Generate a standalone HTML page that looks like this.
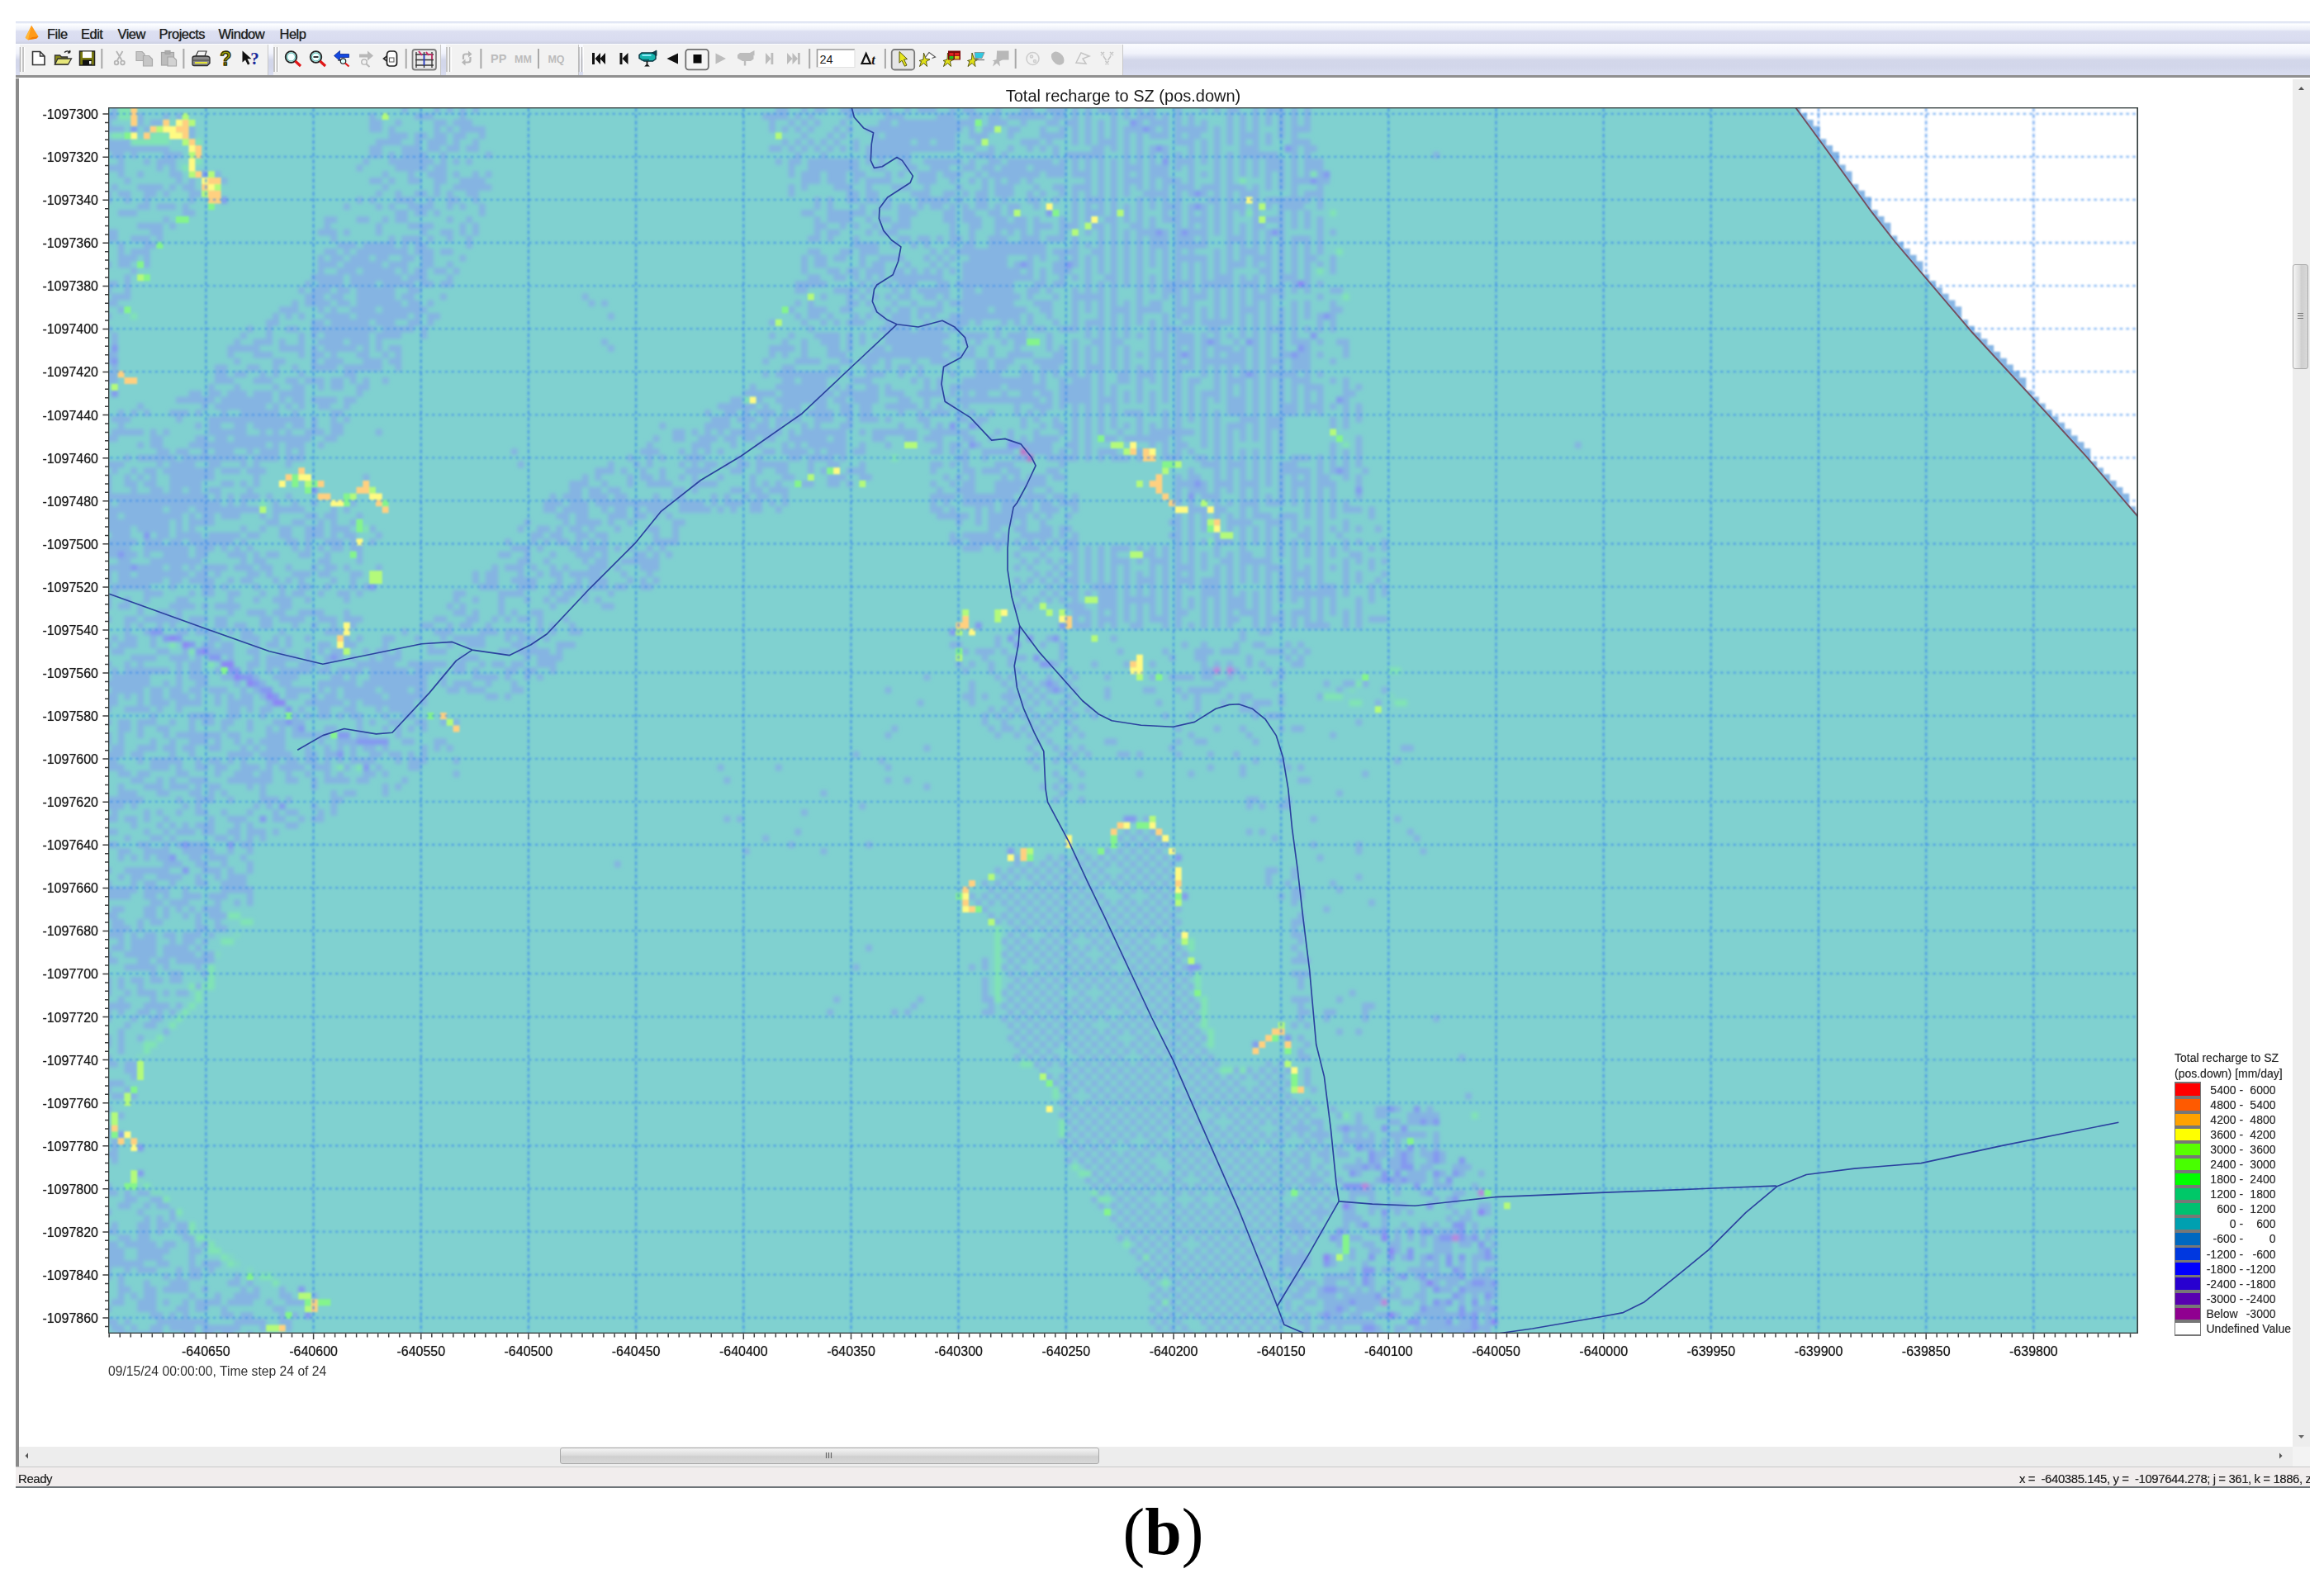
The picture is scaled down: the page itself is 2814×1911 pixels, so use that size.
<!DOCTYPE html>
<html><head><meta charset="utf-8"><title>Total recharge to SZ (pos.down)</title>
<style>
html,body{margin:0;padding:0;background:#fff;}
body{width:2814px;height:1911px;position:relative;overflow:hidden;font-family:"Liberation Sans",sans-serif;color:#222;}
.abs{position:absolute;}
#menubar{left:19px;top:25.5px;width:2778px;height:27.5px;background:linear-gradient(#ccd4ea 0%,#e4e9f6 5%,#fdfeff 12%,#eef1fa 35%,#dcdff1 45%,#d9dcf0 85%,#ccd0e2 100%);}
#toolbar{left:19px;top:53px;width:2778px;height:39px;background:linear-gradient(#fbfcff 0%,#f0f2fb 30%,#d3d7ea 50%,#d2d6ea 70%,#dadef1 100%);}
#tbline{left:19px;top:91.3px;width:2778px;height:3.2px;background:#909090;}
.tbseg{top:54px;height:37px;background:#f2f2f2;border-right:1px solid #c8c8c8;}
.menu{top:31px;font-size:16.5px;letter-spacing:-0.5px;line-height:20px;color:#1c1c1c;white-space:nowrap;text-shadow:0 0 0.7px rgba(0,0,0,.55);}
#lborder{left:19px;top:95px;width:3.5px;height:1681px;background:#8a8a8a;}
#vscroll{left:2775.5px;top:95.5px;width:21.5px;height:1657px;background:#ededed;}
#hscroll{left:22.5px;top:1752px;width:2753px;height:23.5px;background:#ededed;}
#corner{left:2775.5px;top:1752px;width:21.5px;height:23.5px;background:#f3f3f3;}
#status{left:19px;top:1776px;width:2778px;height:24.5px;background:#f1eded;border-top:1.5px solid #c9c9c9;box-sizing:border-box;}
#statusline{left:19px;top:1800.2px;width:2778px;height:1.9px;background:#6e7478;}
.st{top:1781px;font-size:15px;letter-spacing:-0.44px;line-height:20px;color:#222;white-space:pre;text-shadow:0 0 0.6px rgba(0,0,0,.45);}
.ax{font-size:16px;line-height:18px;color:#1a1a1a;white-space:nowrap;text-shadow:0 0 0.9px rgba(0,0,0,.65);}
.lg{font-size:14px;line-height:16px;color:#2a2a2a;white-space:pre;text-shadow:0 0 0.7px rgba(0,0,0,.45);}
.thumb{border:1px solid #a9a9a9;border-radius:3px;box-sizing:border-box;}
#win{position:absolute;left:0;top:0;width:2814px;height:1806px;filter:blur(0.65px);}
</style></head><body>
<div id="win">
<div id="menubar" class="abs"></div>
<div id="toolbar" class="abs"></div>
<div class="abs tbseg" style="left:24px;width:300px;"></div>
<div class="abs tbseg" style="left:331px;width:202px;"></div>
<div class="abs tbseg" style="left:540px;width:160px;"></div>
<div class="abs tbseg" style="left:706px;width:653px;"></div>
<div id="tbline" class="abs"></div>
<svg class="abs" style="left:28px;top:30px" width="22" height="20" viewBox="0 0 26 24"><path d="M12 1 L3 19 L7 22 L19 20 L22 17 Z" fill="#ff9a1a"/><path d="M12 1 L3 19 L7 22 Z" fill="#ffb73a"/><path d="M7 22 L19 20 L22 17 L13 18Z" fill="#f57c00"/></svg>
<span class="abs menu" style="left:57px;">File</span>
<span class="abs menu" style="left:98px;">Edit</span>
<span class="abs menu" style="left:142.5px;">View</span>
<span class="abs menu" style="left:192.5px;">Projects</span>
<span class="abs menu" style="left:264.5px;">Window</span>
<span class="abs menu" style="left:338.5px;">Help</span>
<div id="lborder" class="abs"></div>
<div id="vscroll" class="abs"></div>
<div id="hscroll" class="abs"></div>
<div id="corner" class="abs"></div>
<div class="abs thumb" style="left:2776px;top:320px;width:19px;height:127px;background:linear-gradient(90deg,#f4f4f4,#dcdcdc 45%,#cfcfcf 55%,#d8d8d8);"></div>
<div class="abs thumb" style="left:678px;top:1753px;width:653px;height:19.5px;background:linear-gradient(#f4f4f4,#dcdcdc 45%,#cfcfcf 55%,#d8d8d8);"></div>
<svg class="abs" style="left:2775px;top:95px" width="22" height="1680" viewBox="0 0 22 1680">
<path d="M8 14 L11.5 10 L15 14Z" fill="#555"/><path d="M8 1643 L11.5 1647 L15 1643Z" fill="#666"/>
<path d="M7 284.500 h7 M7 287.500 h7 M7 290.500 h7" stroke="#777" stroke-width="1.2"/></svg>
<svg class="abs" style="left:22px;top:1752px" width="2754" height="24" viewBox="0 0 2754 24">
<path d="M12 7.5 L8.5 11 L12 14.5Z" fill="#555"/><path d="M2738 7.5 L2741.5 11 L2738 14.5Z" fill="#555"/>
<path d="M978.500 7 v7 M981.500 7 v7 M984.500 7 v7" stroke="#666" stroke-width="1.2"/></svg>
<div id="status" class="abs"></div>
<div id="statusline" class="abs"></div>
<span class="abs st" style="left:22px;">Ready</span>
<span class="abs st" style="left:2445px;width:352px;overflow:hidden;">x =  -640385.145, y =  -1097644.278; j = 361, k = 1886, z = 0</span>
<svg class="abs" style="left:0;top:50px" width="1400" height="46" viewBox="0 50 1400 46">
<g stroke="#b5b5b5" stroke-width="1.5">
<path d="M24.500 57v30 M28 57v30 M332 57v30 M335.500 57v30 M541 57v30 M544.500 57v30 M701 57v30 M704.500 57v30"/>
</g>
<g stroke="#fff" stroke-width="1.2"><path d="M26.200 57v30 M29.700 57v30 M333.700 57v30 M337.200 57v30 M542.700 57v30 M546.200 57v30 M702.700 57v30 M706.200 57v30"/></g>
<g stroke="#a8a8a8" stroke-width="2"><path d="M123.300 59v24 M222.400 59v24 M491.700 59v24 M582.400 59v24 M652 59v24 M980.200 59v24 M1071.900 59v24 M1229.700 59v24"/></g>
<!-- new -->
<path d="M39.500 62.500h9l5.500 5.500v10.500h-14.500z" fill="#fff" stroke="#333" stroke-width="1.6"/><path d="M48.500 62.500v5.500h5.500" fill="none" stroke="#333" stroke-width="1.4"/>
<!-- open -->
<path d="M66.500 67h6l2 2h7v9h-15z" fill="#8a8a1a" stroke="#333" stroke-width="1.3"/><path d="M66.500 78l3.500-7h16.500l-4 7z" fill="#e6e67a" stroke="#333" stroke-width="1.3"/><path d="M78 63.500c2-2 5-2 7 0m0 0l-0.500-2.500m0.500 2.500l-3 0.500" fill="none" stroke="#222" stroke-width="1.4"/>
<!-- save -->
<rect x="96.500" y="62" width="18" height="17" fill="#7a7a10" stroke="#222" stroke-width="1.5"/><rect x="100" y="62.500" width="11" height="7.500" fill="#fff"/><rect x="100" y="72.500" width="11" height="6.500" fill="#111"/><rect x="108" y="74" width="2.500" height="3.500" fill="#fff"/>
<!-- cut copy paste (disabled) -->
<g fill="none" stroke="#b4b4b4" stroke-width="1.8"><path d="M141 62l6.500 11 M148.500 62l-6.500 11"/><circle cx="141" cy="76" r="2.300"/><circle cx="148.500" cy="76" r="2.300"/></g>
<g fill="#c6c6c6" stroke="#aaa" stroke-width="1.2"><path d="M165 62.500h7l3 3v8h-10z"/><path d="M173.500 67.500h7l4 4v8.500h-11z"/></g>
<g fill="#bdbdbd" stroke="#a4a4a4" stroke-width="1.2"><rect x="195.500" y="63.500" width="15" height="15.500"/><rect x="200" y="61.500" width="6" height="4" fill="#ababab"/><path d="M203 69h7l3.500 3.500v7.500h-10.500z" fill="#d2d2d2"/></g>
<!-- print -->
<path d="M237 68l3-6h10l-2 6z" fill="#f4f4f4" stroke="#333" stroke-width="1.2"/><path d="M233 70.500q0-2.500 3-2.500h14q4 0 4 3v5.500l-3 3h-16q-2 0-2-2z" fill="#8a8a8a" stroke="#2a2a2a" stroke-width="1.3"/><path d="M236 76h15" stroke="#e4e43a" stroke-width="2"/><path d="M234 73h19" stroke="#4a4a4a" stroke-width="1.2"/>
<!-- ? -->
<text x="273.200" y="78.500" font-family="Liberation Sans,sans-serif" font-weight="bold" font-size="23" text-anchor="middle" fill="#a6a608" stroke="#2c2c00" stroke-width="1.3">?</text>
<!-- pointer ? -->
<path d="M293.500 61.500v14l3.500-3 3 6 2.500-1.200-3-6h5z" fill="#111"/>
<text x="308.500" y="77.500" font-family="Liberation Serif,serif" font-weight="bold" font-size="21" text-anchor="middle" fill="#1a2a9a">?</text>
<!-- zoom in/out -->
<g fill="none"><circle cx="352.500" cy="69" r="6.800" stroke="#222" stroke-width="1.8" fill="#f4ffff"/><circle cx="352.500" cy="69" r="5" stroke="#39b0a8" stroke-width="1"/><path d="M357.500 74l6.500 6" stroke="#e01818" stroke-width="3.200"/>
<circle cx="382.500" cy="69" r="6.800" stroke="#222" stroke-width="1.800" fill="#f4ffff"/><circle cx="382.500" cy="69" r="5" stroke="#39b0a8" stroke-width="1"/><path d="M379.500 69h6" stroke="#222" stroke-width="1.800"/><path d="M387.500 74l6.500 6" stroke="#e01818" stroke-width="3.200"/></g>
<!-- prev/next zoom -->
<path d="M404.500 67.500l7-6v4h11v4h-11v4z" fill="#1448e0" stroke="#0a2890" stroke-width="0.800"/><circle cx="415.500" cy="74" r="3.200" fill="#dff" stroke="#222" stroke-width="1.200"/><path d="M418 76.500l4.500 4" stroke="#e01818" stroke-width="2.200"/><path d="M409 73h3" stroke="#333" stroke-width="1.200"/>
<path d="M452 67.500l-7-6v4h-10v4h10v4z" fill="#b8b8b8"/><circle cx="441" cy="75" r="3.200" fill="none" stroke="#b0b0b0" stroke-width="1.300"/><path d="M443.500 77.500l4 3.500" stroke="#b8b8b8" stroke-width="2"/>
<!-- pan -->
<path d="M468.500 66.500q0-4 3.500-4.500h5q3.500 0.500 3.500 4.500v10q0 3-3 3.500h-6q-3-0.500-3-3.500z" fill="#fff" stroke="#222" stroke-width="1.700"/><path d="M468.500 68l-4 3 4 3" fill="none" stroke="#222" stroke-width="1.600"/><rect x="471.500" y="70" width="5.500" height="5" fill="none" stroke="#666" stroke-width="1.100"/>
<!-- grid button -->
<rect x="499.500" y="60" width="28.500" height="24.500" rx="3" fill="#e9e9e9" stroke="#7d7d7d" stroke-width="1.800"/>
<g stroke="#333" stroke-width="1.300" fill="none"><path d="M504 63v19 M513.500 63v19 M523 63v19 M503 66h22 M503 72.500h22 M503 79h22"/></g>
<path d="M507 62l4 5 M516 63l3 4" stroke="#d02a6a" stroke-width="2"/><path d="M513.500 66v13" stroke="#2038d0" stroke-width="1.600"/><path d="M519 66h4v6" stroke="#d02a6a" stroke-width="1.500" fill="none"/>
<!-- refresh disabled -->
<g fill="none" stroke="#b6b6b6" stroke-width="2.200"><path d="M561 72v-4q0-2.500 3-2.500h5"/><path d="M569.500 69v4q0 2.500-3 2.500h-5"/></g><path d="M567 61.500l4.500 4-4.500 4z M563.500 71.500l-4.500 4 4.500 4z" fill="#b6b6b6"/>
<g font-family="Liberation Sans,sans-serif" font-weight="bold" font-size="14.500" fill="#bcbcbc" text-anchor="middle"><text x="603.700" y="76">PP</text><text x="633.500" y="75.500" font-size="12.500">MM</text><text x="673.500" y="75.500" font-size="12.500">MQ</text></g>
<!-- playback -->
<g fill="#111"><rect x="717" y="64" width="3" height="14"/><path d="M726.500 71l6.500-7v14z M720.500 71l6.500-7v14z"/>
<rect x="750.500" y="64" width="3" height="14"/><path d="M753.500 71l7-7v14z"/>
<path d="M807.500 71l13.500-6.500v13z"/><rect x="839.500" y="66" width="10" height="10.500"/></g>
<rect x="830.300" y="59.800" width="27.500" height="24.500" rx="3.500" fill="#f4f4f4" stroke="#6e6e6e" stroke-width="1.800"/><rect x="839.500" y="66" width="10" height="10.500" fill="#0a0a0a"/>
<!-- camera teal -->
<path d="M774 66.500l3-2.500h13.500l3.500 2v5.500l-3.500 2.500h-10.500l-6-3.500z" fill="#16b4ae" stroke="#0a3440" stroke-width="1.400"/><path d="M777.500 67h11" stroke="#9af0ff" stroke-width="1.800"/><path d="M789.500 64l5.500-3v6.500z" fill="#0a4450" stroke="#08303a" stroke-width="0.800"/><path d="M776 72.500h10" stroke="#0a5a60" stroke-width="1.400"/><path d="M783.500 74v3.500" stroke="#222" stroke-width="2"/><path d="M780.200 80.500l3.300-3.500 3.300 3.500z" fill="#111"/>
<g fill="#bcbcbc"><path d="M879 71l-12.500-6.500v13z"/>
<path d="M893 66.500l3-2.500h13l3.500 2v5.500l-3.500 2.500h-10l-6-3.500z"/><path d="M908 64l5.500-3v6.500z"/><rect x="900.800" y="74" width="2.400" height="5.500"/>
<rect x="933.500" y="64" width="2.800" height="14"/><path d="M933.500 71l-6.500-7v14z"/>
<rect x="966" y="64" width="2.800" height="14"/><path d="M966 71l-6.500-7v14z M959.500 71l-6.500-7v14z"/></g>
<!-- input -->
<rect x="989.500" y="60" width="45.500" height="21.500" fill="#fff"/><path d="M989.500 81.500v-21.500h45.500" fill="none" stroke="#9a9a9a" stroke-width="1.600"/><path d="M989.500 81.500h45.500v-21.500" fill="none" stroke="#e2e2e2" stroke-width="1.200"/>
<text x="992.500" y="76.500" font-family="Liberation Sans,sans-serif" font-size="14.500" fill="#222">24</text>
<path d="M1043.500 77l5.200-12 5.200 12z" fill="none" stroke="#111" stroke-width="2.200"/><text x="1055.200" y="77.500" font-family="Liberation Serif,serif" font-style="italic" font-weight="bold" font-size="16" fill="#111">t</text>
<!-- pointer box -->
<rect x="1079.700" y="60" width="27.500" height="24.500" rx="3.500" fill="#e6e6e6" stroke="#7a7a7a" stroke-width="1.800"/>
<path d="M1089 62.500l9.500 9-4 0.500 3.500 7-2.500 1.200-3.500-7-3 3z" fill="#e8e820" stroke="#55550a" stroke-width="1"/>
<g id="ystar"><path d="M1113 73.500l5-1.500 0.500-8 2.500 7 5 1-4.500 2.500 1 6-4-4-5 4 2-6z" fill="#e0e018" stroke="#4a4a08" stroke-width="0.900"/></g>
<path d="M1120 70l5-6.500 7.500 5.500-4 1.500" fill="#fff" stroke="#555" stroke-width="1.200"/>
<path d="M1142 73.500l5-1.500 0.500-8 2.500 7 5 1-4.500 2.500 1 6-4-4-5 4 2-6z" fill="#e0e018" stroke="#4a4a08" stroke-width="0.900"/>
<rect x="1148" y="61.500" width="15" height="11" fill="#7a0a0a"/><rect x="1149.500" y="64" width="5" height="3.500" fill="#e02020"/><rect x="1156" y="64" width="5.500" height="3.500" fill="#e02020"/><rect x="1149.500" y="68" width="5" height="3.500" fill="#20c020"/><rect x="1156" y="68" width="5.500" height="3.500" fill="#e0c020"/>
<path d="M1171.500 73.500l5-1.500 0.500-8 2.500 7 5 1-4.500 2.500 1 6-4-4-5 4 2-6z" fill="#e0e018" stroke="#4a4a08" stroke-width="0.900"/>
<path d="M1180 63.500h12l-3 7h-8z" fill="#30c8e0" stroke="#888" stroke-width="0.800"/><path d="M1180 72.500h12" stroke="#777" stroke-width="1.300"/>
<g fill="#b8b8b8"><path d="M1201.500 73.500l5-1.500 0.500-8 2.500 7 5 1-4.500 2.500 1 6-4-4-5 4 2-6z"/><rect x="1207" y="61.500" width="14.500" height="11"/></g>
<g fill="none" stroke="#cdcdcd" stroke-width="1.600"><circle cx="1250.500" cy="71" r="7.500"/><circle cx="1249" cy="68.500" r="1.500"/><circle cx="1253" cy="74" r="1.500"/></g>
<path d="M1273 66q4-6 10-2 7 5 5 12-4 5-10 1-6-5-5-11z" fill="#bdbdbd"/>
<g fill="none" stroke="#c4c4c4" stroke-width="1.500"><path d="M1303 76l6-12 10 4-8 3 4 6z"/><path d="M1333 63l4 4m0-4l-4 4 M1344 63l4 4m0-4l-4 4 M1338.500 74l4 4m0-4l-4 4 M1336 68l3.500 5 M1345 68l-3.500 5"/></g>
</svg>
<svg class="abs" style="left:131.0px;top:130.3px" width="2457.7" height="1485.0" viewBox="131.0 130.3 2457.7 1485.0">
<defs><filter id="bl" x="-1%" y="-1%" width="102%" height="102%"><feGaussianBlur stdDeviation="1.0"/></filter><filter id="blc" x="-1%" y="-1%" width="102%" height="102%"><feGaussianBlur stdDeviation="2.2"/></filter><filter id="bl2"><feGaussianBlur stdDeviation="0.6"/></filter><filter id="bl3"><feGaussianBlur stdDeviation="0.9"/></filter></defs>
<rect x="131.0" y="130.3" width="2457.7" height="1485.0" fill="#fff"/>
<g filter="url(#bl)">
<path fill="#86b5e4" d="M2172.3 129.6h7.8v7.8h-7.8zM2172.3 137.4h15.6v7.8h-15.6zM2180.1 145.2h15.6v7.8h-15.6zM2187.9 153.0h15.6v7.8h-15.6zM2195.7 160.8h7.8v7.8h-7.8zM2195.7 168.6h15.6v7.8h-15.6zM2203.5 176.4h15.6v7.8h-15.6zM2211.3 184.2h15.6v7.8h-15.6zM2219.1 192.0h7.8v7.8h-7.8zM2219.1 199.9h15.6v7.8h-15.6zM2226.9 207.7h15.6v7.8h-15.6zM2234.7 215.5h7.8v7.8h-7.8zM2234.7 223.3h15.6v7.8h-15.6zM2242.5 231.1h15.6v7.8h-15.6zM2250.3 238.9h15.6v7.8h-15.6zM2258.1 246.7h7.8v7.8h-7.8zM2258.1 254.5h15.6v7.8h-15.6zM2265.9 262.3h15.6v7.8h-15.6zM2273.8 270.1h15.6v7.8h-15.6zM2281.6 277.9h7.8v7.8h-7.8zM2281.6 285.7h15.6v7.8h-15.6zM2289.4 293.5h15.6v7.8h-15.6zM2297.2 301.3h15.6v7.8h-15.6zM2305.0 309.1h15.6v7.8h-15.6zM2312.8 316.9h15.6v7.8h-15.6zM2320.6 324.8h7.8v7.8h-7.8zM2320.6 332.6h15.6v7.8h-15.6zM2328.4 340.4h15.6v7.8h-15.6zM2336.2 348.2h15.6v7.8h-15.6zM2344.0 356.0h15.6v7.8h-15.6zM2351.8 363.8h15.6v7.8h-15.6zM2359.6 371.6h15.6v7.8h-15.6zM2367.4 379.4h7.8v7.8h-7.8zM2367.4 387.2h15.6v7.8h-15.6zM2375.2 395.0h15.6v7.8h-15.6zM2383.0 402.8h15.6v7.8h-15.6zM2390.8 410.6h15.6v7.8h-15.6zM2398.6 418.4h15.6v7.8h-15.6zM2406.5 426.2h15.6v7.8h-15.6zM2414.3 434.0h15.6v7.8h-15.6zM2422.1 441.8h15.6v7.8h-15.6zM2429.9 449.6h15.6v7.8h-15.6zM2437.7 457.5h15.6v7.8h-15.6zM2445.5 465.3h7.8v7.8h-7.8zM2445.5 473.1h15.6v7.8h-15.6zM2453.3 480.9h15.6v7.8h-15.6zM2461.1 488.7h15.6v7.8h-15.6zM2468.9 496.5h15.6v7.8h-15.6zM2476.7 504.3h15.6v7.8h-15.6zM2484.5 512.1h15.6v7.8h-15.6zM2492.3 519.9h15.6v7.8h-15.6zM2500.1 527.7h15.6v7.8h-15.6zM2507.9 535.5h15.6v7.8h-15.6zM2515.7 543.3h15.6v7.8h-15.6zM2523.5 551.1h7.8v7.8h-7.8zM2523.5 558.9h15.6v7.8h-15.6zM2531.3 566.7h15.6v7.8h-15.6zM2539.2 574.5h15.6v7.8h-15.6zM2547.0 582.3h15.6v7.8h-15.6zM2554.8 590.2h15.6v7.8h-15.6zM2562.6 598.0h15.6v7.8h-15.6zM2570.4 605.8h7.8v7.8h-7.8zM2570.4 613.6h15.6v7.8h-15.6zM2578.2 621.4h15.6v7.8h-15.6z"/>
<path fill="#80d1d0" d="M131.0 130.3L2174.0 130.3L2201.4 167.5L2267.0 258.0L2294.7 293.3L2388.0 402.8L2461.0 481.9L2526.0 552.9L2588.7 626.0L2588.7 1615.3L131.0 1615.3Z"/>
</g>
<clipPath id="tc"><path d="M131.0 130.3L2174.0 130.3L2201.4 167.5L2267.0 258.0L2294.7 293.3L2388.0 402.8L2461.0 481.9L2526.0 552.9L2588.7 626.0L2588.7 1615.3L131.0 1615.3Z"/></clipPath>
<g clip-path="url(#tc)"><g filter="url(#blc)"><g transform="translate(127.10 133.50) scale(7.806)" stroke-width="1.02" fill="none">
<path stroke="#85b4e2" d="M1 0h1M46 0h1M51 0h1M53 0h1M55 0h1M57 0h1M104 0h2M108 0h1M110 0h2M114 0h5M120 0h2M124 0h1M126 0h3M131 0h1M133 0h2M138 0h1M142 0h2M146 0h3M150 0h1M152 0h1M154 0h3M158 0h1M160 0h1M162 0h1M166 0h1M170 0h1M172 0h1M174 0h2M178 0h1M180 0h3M184 0h1M186 0h1M0 1h2M5 1h1M9 1h1M11 1h1M41 1h1M48 1h3M55 1h1M102 1h4M107 1h1M109 1h1M115 1h1M121 1h3M129 1h3M134 1h2M137 1h2M140 1h6M147 1h2M150 1h1M152 1h1M156 1h1M158 1h1M160 1h3M164 1h1M166 1h1M168 1h1M174 1h1M176 1h1M178 1h1M180 1h1M182 1h1M184 1h1M186 1h1M0 2h1M5 2h1M7 2h2M41 2h2M45 2h1M51 2h2M54 2h3M103 2h1M106 2h1M108 2h1M110 2h1M114 2h1M120 2h2M123 2h12M137 2h3M142 2h1M146 2h2M149 2h2M152 2h1M154 2h1M156 2h1M160 2h1M162 2h3M166 2h1M168 2h1M170 2h1M174 2h1M176 2h1M178 2h1M180 2h1M182 2h1M184 2h1M186 2h1M0 3h3M6 3h1M13 3h1M41 3h2M44 3h1M51 3h1M53 3h1M55 3h4M103 3h1M105 3h1M107 3h1M109 3h1M113 3h1M115 3h1M118 3h15M134 3h1M136 3h2M140 3h2M145 3h1M148 3h1M150 3h1M152 3h1M154 3h1M156 3h1M158 3h3M162 3h1M164 3h1M166 3h5M172 3h1M174 3h1M176 3h1M178 3h1M182 3h1M184 3h3M13 4h1M44 4h3M48 4h2M51 4h2M54 4h2M58 4h1M108 4h1M112 4h1M114 4h1M119 4h1M121 4h11M134 4h3M140 4h1M145 4h4M150 4h1M152 4h1M154 4h1M156 4h1M158 4h1M160 4h1M162 4h3M166 4h1M168 4h2M172 4h1M174 4h1M176 4h3M180 4h1M182 4h1M184 4h1M0 5h4M42 5h4M48 5h1M50 5h3M54 5h1M57 5h1M105 5h1M107 5h1M109 5h1M111 5h1M113 5h1M116 5h1M119 5h6M126 5h2M129 5h3M135 5h1M142 5h3M146 5h1M150 5h1M152 5h1M154 5h3M158 5h1M160 5h1M166 5h3M170 5h1M172 5h1M174 5h1M176 5h1M178 5h1M180 5h1M184 5h3M0 6h10M41 6h2M46 6h3M50 6h2M53 6h2M56 6h2M103 6h2M106 6h1M108 6h1M110 6h1M112 6h1M114 6h1M116 6h1M118 6h14M133 6h2M137 6h1M140 6h1M143 6h1M145 6h1M147 6h1M153 6h2M156 6h1M158 6h1M160 6h1M162 6h1M164 6h1M168 6h1M170 6h1M172 6h1M176 6h3M184 6h1M186 6h2M1 7h2M4 7h1M9 7h3M41 7h2M44 7h1M46 7h4M52 7h1M59 7h1M107 7h1M111 7h1M118 7h7M135 7h3M139 7h1M147 7h1M149 7h6M158 7h1M160 7h1M162 7h1M164 7h1M166 7h1M168 7h1M170 7h1M172 7h1M174 7h1M176 7h6M184 7h1M186 7h1M206 7h1M2 8h1M6 8h1M8 8h3M40 8h1M44 8h7M52 8h1M54 8h1M56 8h1M104 8h1M106 8h2M109 8h8M118 8h1M120 8h1M123 8h2M127 8h6M134 8h1M137 8h2M140 8h7M148 8h1M150 8h1M152 8h1M154 8h1M156 8h1M158 8h1M160 8h1M162 8h1M166 8h3M170 8h1M172 8h1M174 8h1M176 8h1M178 8h1M180 8h3M184 8h1M186 8h3M0 9h3M8 9h1M10 9h1M39 9h1M45 9h5M51 9h2M106 9h1M109 9h8M119 9h2M124 9h2M128 9h3M133 9h2M136 9h2M139 9h4M144 9h5M150 9h1M152 9h1M154 9h1M156 9h1M158 9h3M162 9h3M166 9h1M168 9h1M172 9h1M174 9h1M176 9h1M178 9h1M180 9h3M184 9h1M186 9h3M2 10h1M5 10h1M10 10h2M17 10h1M43 10h1M47 10h1M50 10h3M54 10h1M57 10h1M59 10h1M106 10h1M108 10h3M112 10h3M116 10h2M121 10h1M123 10h1M126 10h3M130 10h3M135 10h1M137 10h8M146 10h3M150 10h3M154 10h1M156 10h1M158 10h1M160 10h1M162 10h3M168 10h1M170 10h1M172 10h1M174 10h1M176 10h1M178 10h1M180 10h1M182 10h1M184 10h1M186 10h1M188 10h1M3 11h1M11 11h1M13 11h1M18 11h1M41 11h2M44 11h1M47 11h2M51 11h2M55 11h4M108 11h3M112 11h3M116 11h1M118 11h4M126 11h3M131 11h1M134 11h1M136 11h1M138 11h1M140 11h2M143 11h1M152 11h1M154 11h1M156 11h1M158 11h3M162 11h1M164 11h3M168 11h1M172 11h1M174 11h1M180 11h1M182 11h1M184 11h3M188 11h2M1 12h1M5 12h4M10 12h1M12 12h2M43 12h1M51 12h1M54 12h6M106 12h1M108 12h1M113 12h3M118 12h1M122 12h3M127 12h1M132 12h1M136 12h1M138 12h3M144 12h1M147 12h2M150 12h3M154 12h1M156 12h1M158 12h1M160 12h1M162 12h1M164 12h1M166 12h3M170 12h3M174 12h3M178 12h1M180 12h1M182 12h1M184 12h1M188 12h1M0 13h1M2 13h2M6 13h2M9 13h1M13 13h2M42 13h1M45 13h1M48 13h2M51 13h1M53 13h1M56 13h2M106 13h1M115 13h2M118 13h2M125 13h3M130 13h2M133 13h1M135 13h2M138 13h3M143 13h1M145 13h1M148 13h1M150 13h1M152 13h1M154 13h1M156 13h1M158 13h1M161 13h4M166 13h1M168 13h1M170 13h1M172 13h1M174 13h1M176 13h3M184 13h1M186 13h3M0 14h1M3 14h1M6 14h1M13 14h1M39 14h1M41 14h1M45 14h3M50 14h1M53 14h2M57 14h1M110 14h1M112 14h1M115 14h2M118 14h2M121 14h1M126 14h5M132 14h1M135 14h2M139 14h1M143 14h2M147 14h1M150 14h1M152 14h3M156 14h1M160 14h1M162 14h1M164 14h1M166 14h1M171 14h2M174 14h1M176 14h1M178 14h1M180 14h7M188 14h1M5 15h2M8 15h3M12 15h1M37 15h1M42 15h1M44 15h1M47 15h4M53 15h1M55 15h1M58 15h1M110 15h1M112 15h1M117 15h1M120 15h2M123 15h2M126 15h1M128 15h2M131 15h1M133 15h1M135 15h2M138 15h1M140 15h2M144 15h1M150 15h1M152 15h1M154 15h1M156 15h1M158 15h1M160 15h1M162 15h1M164 15h3M168 15h1M170 15h1M172 15h1M174 15h3M178 15h1M180 15h1M182 15h4M188 15h1M2 16h3M12 16h2M45 16h2M48 16h2M51 16h1M58 16h1M108 16h2M112 16h6M119 16h1M123 16h3M130 16h2M133 16h2M137 16h2M140 16h1M150 16h1M152 16h3M156 16h1M158 16h1M160 16h1M164 16h1M166 16h1M168 16h1M170 16h1M172 16h1M174 16h1M176 16h1M178 16h1M182 16h1M184 16h1M186 16h1M9 17h1M34 17h2M39 17h2M43 17h1M45 17h2M53 17h1M56 17h1M110 17h1M112 17h4M118 17h1M120 17h2M123 17h2M130 17h2M133 17h3M138 17h2M141 17h2M144 17h1M148 17h1M150 17h1M152 17h1M155 17h2M158 17h1M160 17h1M162 17h1M164 17h3M168 17h3M172 17h1M174 17h1M178 17h1M180 17h3M184 17h1M186 17h1M188 17h1M5 18h4M10 18h1M34 18h1M42 18h1M47 18h4M55 18h1M57 18h1M110 18h2M114 18h1M116 18h1M119 18h1M122 18h3M131 18h1M134 18h2M138 18h5M144 18h3M148 18h3M153 18h2M156 18h1M159 18h2M162 18h1M166 18h1M168 18h1M170 18h1M172 18h1M174 18h1M176 18h1M178 18h2M182 18h1M184 18h1M186 18h1M188 18h1M0 19h2M7 19h2M33 19h3M37 19h1M42 19h1M49 19h1M52 19h2M55 19h1M57 19h1M110 19h1M112 19h2M118 19h1M120 19h3M131 19h1M134 19h1M138 19h1M140 19h1M142 19h1M144 19h1M148 19h1M152 19h1M154 19h1M156 19h1M158 19h1M160 19h3M164 19h1M166 19h1M168 19h3M172 19h1M174 19h1M176 19h1M178 19h1M180 19h1M182 19h1M188 19h1M190 19h1M0 20h2M4 20h3M8 20h1M35 20h1M44 20h1M46 20h3M50 20h1M53 20h1M56 20h1M109 20h2M112 20h1M116 20h1M123 20h2M126 20h2M129 20h1M131 20h2M134 20h1M137 20h3M142 20h3M146 20h3M150 20h1M154 20h1M156 20h1M158 20h1M160 20h1M162 20h3M166 20h3M170 20h1M174 20h3M178 20h1M180 20h1M182 20h1M184 20h3M188 20h1M2 21h1M6 21h2M36 21h3M40 21h5M46 21h1M48 21h2M56 21h1M116 21h4M122 21h1M125 21h1M127 21h1M131 21h1M133 21h2M137 21h9M150 21h1M152 21h1M154 21h1M156 21h1M158 21h1M160 21h1M162 21h3M166 21h5M174 21h1M176 21h1M178 21h1M180 21h1M182 21h1M184 21h1M186 21h1M188 21h1M2 22h1M4 22h3M34 22h2M37 22h1M39 22h8M48 22h3M52 22h2M109 22h2M114 22h2M117 22h3M128 22h1M130 22h1M132 22h14M147 22h4M153 22h2M156 22h1M158 22h1M160 22h1M162 22h1M164 22h1M166 22h1M168 22h1M172 22h1M174 22h1M176 22h3M180 22h1M182 22h1M184 22h1M186 22h1M188 22h1M2 23h3M6 23h1M33 23h1M35 23h2M38 23h3M42 23h2M46 23h2M49 23h2M55 23h1M108 23h1M110 23h2M113 23h2M117 23h1M120 23h4M127 23h1M129 23h1M131 23h1M134 23h6M143 23h1M145 23h1M148 23h1M150 23h1M152 23h1M154 23h1M156 23h1M158 23h1M160 23h1M162 23h1M164 23h1M166 23h5M172 23h1M174 23h1M176 23h1M178 23h3M182 23h1M184 23h1M186 23h2M190 23h1M0 24h1M2 24h2M6 24h1M33 24h3M37 24h6M44 24h3M49 24h2M53 24h1M108 24h1M110 24h2M117 24h1M119 24h2M124 24h1M128 24h1M130 24h1M133 24h7M141 24h1M143 24h1M147 24h2M150 24h1M152 24h1M154 24h1M156 24h1M158 24h1M160 24h1M162 24h1M164 24h1M166 24h1M168 24h1M170 24h1M172 24h1M174 24h3M178 24h1M180 24h1M182 24h1M184 24h1M186 24h1M188 24h1M190 24h1M4 25h1M33 25h1M36 25h3M40 25h5M46 25h1M48 25h2M51 25h2M54 25h1M108 25h1M112 25h2M115 25h2M118 25h3M122 25h2M125 25h1M127 25h1M129 25h1M131 25h1M133 25h9M143 25h1M145 25h1M147 25h3M152 25h1M154 25h1M156 25h1M158 25h1M160 25h1M164 25h1M166 25h1M168 25h1M170 25h1M172 25h1M174 25h1M179 25h2M182 25h1M184 25h1M186 25h1M190 25h1M3 26h1M32 26h5M38 26h8M47 26h3M53 26h1M109 26h2M113 26h2M116 26h1M118 26h1M120 26h1M122 26h8M133 26h11M145 26h1M148 26h1M150 26h1M152 26h1M155 26h2M158 26h1M160 26h1M162 26h1M164 26h1M166 26h1M168 26h1M170 26h1M172 26h3M176 26h1M178 26h1M180 26h1M182 26h3M186 26h1M0 27h2M3 27h1M31 27h1M33 27h4M38 27h4M43 27h5M49 27h2M52 27h2M107 27h5M117 27h1M119 27h1M121 27h1M123 27h3M129 27h2M132 27h9M144 27h2M147 27h2M152 27h1M154 27h1M156 27h1M158 27h1M160 27h1M162 27h1M164 27h5M170 27h5M176 27h3M180 27h1M182 27h1M184 27h1M186 27h1M188 27h1M0 28h1M3 28h1M30 28h1M32 28h3M36 28h2M39 28h6M47 28h2M107 28h2M113 28h4M118 28h1M122 28h1M124 28h1M126 28h5M133 28h2M136 28h5M143 28h2M146 28h1M150 28h1M152 28h1M154 28h1M156 28h1M160 28h1M162 28h1M164 28h3M168 28h1M170 28h1M172 28h1M174 28h1M176 28h1M178 28h1M180 28h3M184 28h1M186 28h1M190 28h2M1 29h3M31 29h3M35 29h2M39 29h6M46 29h2M52 29h1M74 29h1M111 29h1M115 29h1M117 29h1M119 29h1M121 29h1M123 29h2M127 29h2M130 29h1M133 29h9M143 29h1M147 29h1M150 29h5M156 29h1M160 29h1M164 29h1M166 29h1M168 29h3M172 29h1M174 29h1M176 29h1M178 29h3M182 29h1M188 29h1M0 30h2M29 30h1M31 30h4M36 30h2M39 30h7M47 30h2M50 30h1M75 30h1M77 30h1M107 30h1M109 30h1M115 30h2M118 30h1M122 30h1M125 30h1M129 30h1M131 30h10M144 30h3M150 30h1M152 30h1M154 30h1M156 30h1M158 30h1M160 30h1M162 30h2M166 30h1M168 30h1M172 30h1M174 30h1M176 30h1M178 30h1M180 30h1M184 30h1M186 30h1M190 30h1M2 31h1M27 31h3M33 31h1M35 31h1M38 31h4M43 31h7M106 31h1M109 31h3M114 31h2M119 31h1M121 31h1M123 31h2M126 31h4M133 31h4M138 31h5M145 31h2M150 31h1M152 31h1M154 31h1M156 31h3M160 31h4M166 31h3M170 31h1M172 31h1M174 31h1M176 31h3M180 31h1M182 31h1M184 31h1M186 31h1M190 31h2M0 32h1M26 32h1M28 32h1M30 32h1M34 32h4M39 32h8M48 32h1M50 32h2M78 32h1M107 32h1M109 32h2M112 32h1M116 32h1M118 32h1M120 32h1M122 32h3M126 32h1M128 32h1M131 32h11M143 32h1M146 32h1M150 32h1M154 32h1M156 32h1M158 32h1M160 32h1M164 32h1M166 32h1M168 32h1M170 32h1M172 32h1M174 32h1M176 32h1M178 32h1M180 32h1M182 32h1M184 32h1M186 32h1M188 32h1M190 32h1M25 33h2M32 33h2M35 33h6M42 33h3M47 33h2M50 33h1M103 33h1M108 33h1M111 33h1M113 33h1M115 33h3M121 33h4M127 33h1M129 33h5M135 33h1M139 33h1M141 33h1M143 33h1M147 33h1M150 33h1M152 33h3M156 33h1M158 33h1M160 33h1M162 33h1M164 33h1M167 33h2M170 33h5M176 33h1M178 33h1M180 33h1M182 33h1M184 33h1M188 33h1M190 33h1M0 34h1M22 34h1M25 34h1M28 34h2M32 34h10M43 34h5M49 34h1M109 34h1M120 34h5M126 34h4M131 34h2M138 34h1M142 34h1M144 34h2M148 34h3M152 34h1M154 34h1M156 34h1M158 34h1M162 34h1M164 34h3M171 34h2M176 34h1M178 34h1M180 34h3M184 34h1M186 34h1M188 34h1M190 34h1M1 35h1M21 35h1M25 35h1M30 35h1M32 35h1M34 35h7M42 35h4M49 35h1M103 35h1M106 35h1M110 35h4M115 35h1M117 35h1M119 35h1M121 35h10M133 35h4M138 35h1M140 35h3M146 35h1M152 35h1M154 35h1M156 35h1M158 35h1M160 35h1M162 35h1M164 35h1M166 35h3M170 35h1M172 35h1M174 35h1M176 35h1M178 35h1M180 35h1M182 35h1M184 35h1M1 36h1M20 36h1M23 36h3M27 36h1M30 36h1M33 36h4M38 36h3M42 36h1M77 36h1M105 36h1M108 36h1M111 36h3M115 36h1M117 36h1M121 36h9M133 36h1M135 36h1M139 36h1M141 36h2M146 36h1M150 36h1M153 36h2M156 36h2M162 36h1M164 36h1M166 36h3M170 36h1M172 36h1M175 36h1M178 36h1M180 36h1M182 36h1M184 36h3M188 36h1M191 36h2M19 37h5M27 37h4M32 37h1M34 37h5M40 37h1M42 37h1M44 37h2M78 37h1M103 37h4M108 37h1M112 37h2M115 37h1M119 37h2M122 37h9M134 37h1M137 37h1M141 37h1M146 37h1M148 37h1M150 37h1M152 37h1M154 37h1M156 37h1M158 37h1M162 37h1M164 37h1M166 37h1M168 37h1M170 37h1M172 37h3M176 37h1M178 37h1M180 37h1M182 37h1M186 37h1M192 37h1M0 38h2M19 38h1M23 38h3M30 38h1M32 38h2M35 38h1M39 38h2M43 38h1M45 38h1M103 38h1M105 38h1M108 38h1M112 38h3M118 38h12M131 38h4M137 38h1M140 38h4M147 38h2M150 38h1M152 38h1M154 38h1M156 38h1M158 38h1M160 38h1M162 38h3M166 38h1M168 38h1M170 38h1M172 38h1M174 38h3M178 38h1M180 38h1M182 38h2M185 38h2M188 38h1M192 38h1M0 39h1M20 39h1M26 39h2M32 39h1M34 39h3M40 39h3M44 39h2M102 39h1M107 39h4M114 39h2M117 39h3M121 39h1M125 39h1M128 39h3M135 39h2M138 39h3M144 39h5M150 39h1M152 39h1M154 39h1M156 39h1M158 39h1M162 39h1M164 39h1M166 39h1M168 39h1M170 39h7M178 39h1M180 39h3M184 39h3M190 39h1M1 40h1M17 40h2M22 40h2M26 40h1M29 40h1M32 40h4M37 40h6M45 40h1M105 40h2M112 40h2M118 40h1M121 40h1M123 40h2M126 40h1M130 40h1M135 40h2M138 40h2M142 40h1M145 40h3M150 40h1M152 40h3M156 40h1M158 40h1M160 40h1M162 40h1M164 40h1M166 40h3M170 40h1M172 40h1M174 40h1M176 40h1M178 40h1M180 40h1M182 40h1M184 40h3M0 41h2M17 41h2M20 41h2M24 41h1M26 41h1M30 41h1M37 41h2M102 41h1M104 41h10M115 41h1M118 41h3M123 41h1M126 41h1M131 41h1M135 41h4M142 41h2M145 41h1M147 41h1M149 41h2M152 41h1M154 41h1M157 41h2M160 41h3M164 41h1M166 41h1M170 41h1M172 41h1M174 41h1M176 41h1M178 41h1M180 41h5M186 41h1M188 41h1M0 42h2M17 42h3M23 42h3M28 42h2M31 42h3M35 42h2M38 42h1M40 42h1M43 42h1M105 42h2M108 42h4M116 42h3M125 42h1M127 42h1M129 42h1M133 42h11M145 42h1M148 42h1M150 42h3M154 42h1M157 42h2M160 42h1M162 42h1M164 42h1M166 42h1M168 42h2M172 42h1M174 42h3M178 42h1M180 42h1M182 42h1M184 42h3M190 42h1M192 42h1M16 43h1M20 43h1M26 43h1M29 43h2M33 43h1M35 43h2M39 43h2M100 43h1M104 43h8M113 43h1M115 43h1M118 43h2M121 43h1M127 43h1M129 43h1M131 43h8M140 43h6M148 43h5M154 43h1M156 43h1M160 43h1M164 43h1M166 43h1M168 43h1M172 43h1M174 43h1M176 43h1M178 43h1M180 43h1M182 43h1M184 43h1M186 43h3M192 43h1M194 43h1M13 44h2M16 44h2M19 44h3M23 44h3M27 44h4M39 44h1M99 44h5M105 44h8M114 44h6M121 44h3M126 44h4M131 44h1M133 44h1M135 44h2M139 44h1M142 44h2M145 44h2M148 44h5M154 44h1M156 44h1M158 44h1M160 44h1M162 44h1M164 44h1M166 44h1M168 44h1M170 44h3M174 44h1M176 44h1M178 44h1M180 44h1M182 44h1M184 44h1M186 44h1M188 44h1M192 44h2M11 45h6M18 45h8M27 45h1M29 45h2M32 45h4M37 45h2M97 45h2M101 45h1M104 45h8M113 45h2M116 45h4M123 45h2M127 45h1M130 45h1M132 45h13M146 45h1M148 45h5M154 45h3M158 45h1M160 45h1M162 45h1M164 45h1M166 45h1M168 45h1M170 45h1M172 45h1M174 45h3M178 45h1M180 45h1M182 45h1M184 45h1M186 45h1M188 45h1M192 45h1M5 46h1M15 46h1M17 46h8M26 46h1M28 46h1M30 46h1M33 46h2M37 46h1M95 46h6M102 46h1M105 46h3M110 46h2M114 46h2M117 46h2M121 46h5M127 46h1M129 46h1M131 46h1M133 46h1M141 46h1M144 46h3M148 46h1M150 46h1M152 46h1M154 46h1M156 46h1M162 46h1M166 46h1M168 46h1M170 46h1M174 46h3M178 46h1M180 46h1M182 46h3M186 46h3M190 46h1M192 46h1M194 46h1M2 47h1M4 47h1M6 47h1M10 47h3M14 47h1M18 47h1M21 47h6M29 47h1M35 47h2M93 47h1M96 47h2M99 47h1M101 47h3M105 47h1M107 47h1M109 47h4M114 47h2M117 47h2M123 47h1M126 47h1M128 47h3M132 47h1M134 47h1M137 47h1M141 47h1M143 47h1M145 47h1M150 47h1M152 47h1M154 47h1M156 47h1M158 47h3M162 47h1M164 47h1M166 47h1M168 47h1M170 47h1M172 47h1M174 47h3M178 47h1M180 47h1M182 47h3M186 47h1M188 47h1M192 47h1M194 47h1M1 48h3M11 48h1M16 48h15M32 48h1M35 48h1M37 48h1M94 48h3M98 48h3M102 48h1M104 48h4M110 48h3M115 48h1M117 48h3M121 48h1M126 48h2M132 48h2M135 48h2M142 48h1M144 48h1M147 48h1M150 48h1M152 48h1M154 48h1M156 48h1M160 48h1M164 48h1M166 48h1M168 48h1M170 48h1M172 48h1M176 48h3M180 48h3M190 48h1M192 48h1M194 48h1M2 49h1M14 49h1M16 49h2M20 49h2M23 49h5M29 49h2M32 49h1M35 49h2M86 49h1M93 49h4M99 49h1M101 49h2M104 49h1M108 49h1M110 49h1M114 49h2M123 49h1M127 49h1M129 49h1M135 49h1M142 49h1M145 49h1M147 49h2M150 49h1M152 49h1M154 49h1M156 49h1M158 49h1M160 49h1M162 49h1M164 49h1M166 49h1M170 49h1M172 49h1M174 49h3M178 49h1M180 49h3M190 49h1M192 49h1M1 50h5M7 50h1M9 50h1M16 50h6M24 50h1M26 50h1M28 50h1M31 50h3M35 50h2M42 50h1M88 50h2M91 50h1M93 50h1M95 50h1M97 50h8M106 50h1M108 50h7M117 50h1M119 50h7M128 50h6M138 50h1M140 50h1M144 50h1M148 50h1M150 50h1M152 50h1M154 50h1M157 50h1M160 50h1M162 50h7M170 50h1M172 50h1M174 50h1M176 50h1M178 50h1M180 50h1M182 50h1M0 51h2M7 51h2M14 51h2M17 51h2M20 51h12M34 51h2M85 51h1M88 51h2M92 51h3M96 51h2M99 51h2M102 51h2M106 51h6M113 51h2M119 51h2M124 51h2M127 51h3M133 51h2M137 51h1M140 51h1M142 51h1M144 51h4M150 51h1M152 51h1M155 51h2M158 51h7M166 51h1M170 51h1M172 51h1M174 51h1M176 51h1M178 51h1M180 51h1M182 51h1M194 51h1M5 52h1M7 52h2M13 52h12M26 52h1M28 52h3M33 52h1M84 52h1M91 52h3M97 52h1M101 52h1M105 52h1M107 52h1M109 52h6M117 52h1M121 52h1M129 52h1M131 52h2M135 52h1M142 52h5M149 52h2M152 52h1M162 52h1M164 52h1M166 52h2M170 52h1M172 52h1M174 52h1M180 52h1M182 52h1M190 52h1M194 52h1M228 52h1M8 53h2M11 53h2M15 53h1M17 53h3M22 53h1M24 53h3M28 53h1M30 53h1M63 53h1M83 53h3M89 53h1M91 53h1M93 53h1M95 53h1M102 53h2M105 53h4M110 53h1M112 53h3M116 53h2M128 53h2M131 53h1M133 53h1M136 53h5M143 53h4M148 53h1M150 53h1M152 53h1M154 53h3M160 53h1M164 53h1M166 53h1M168 53h1M172 53h1M174 53h1M176 53h1M178 53h1M180 53h1M182 53h1M190 53h1M192 53h1M194 53h1M3 54h1M5 54h6M12 54h10M23 54h4M28 54h3M81 54h1M84 54h1M86 54h1M90 54h3M98 54h1M101 54h1M106 54h2M109 54h4M114 54h1M132 54h2M136 54h1M141 54h2M146 54h5M152 54h1M154 54h1M156 54h3M160 54h1M164 54h3M169 54h2M172 54h1M174 54h1M176 54h1M178 54h1M180 54h1M184 54h3M188 54h1M190 54h1M192 54h1M194 54h1M0 55h3M8 55h1M10 55h4M16 55h2M21 55h1M23 55h1M28 55h1M64 55h1M78 55h1M82 55h1M84 55h1M89 55h1M91 55h1M93 55h2M96 55h1M98 55h2M101 55h5M109 55h1M112 55h2M117 55h1M128 55h2M131 55h1M133 55h1M138 55h3M148 55h1M170 55h3M174 55h3M178 55h1M180 55h1M182 55h3M188 55h1M190 55h1M192 55h1M194 55h1M1 56h1M4 56h1M6 56h2M9 56h8M18 56h3M22 56h3M76 56h3M80 56h1M83 56h1M86 56h1M90 56h4M97 56h2M101 56h1M104 56h2M109 56h1M111 56h1M115 56h3M128 56h1M133 56h2M136 56h3M140 56h2M146 56h2M168 56h1M172 56h1M174 56h1M176 56h1M178 56h1M180 56h1M182 56h5M188 56h1M190 56h1M192 56h1M195 56h1M0 57h1M3 57h1M5 57h1M7 57h1M10 57h7M23 57h1M40 57h1M74 57h1M76 57h1M81 57h1M83 57h2M86 57h1M89 57h1M91 57h1M95 57h1M100 57h1M105 57h2M112 57h3M117 57h2M130 57h1M132 57h1M134 57h1M139 57h1M141 57h1M143 57h3M147 57h2M166 57h1M168 57h2M172 57h1M174 57h1M176 57h1M178 57h1M180 57h1M182 57h1M184 57h1M186 57h1M188 57h2M192 57h1M194 57h1M0 58h1M3 58h2M6 58h2M10 58h5M18 58h2M21 58h1M23 58h1M72 58h3M77 58h1M81 58h1M84 58h4M91 58h4M100 58h1M102 58h1M104 58h1M108 58h2M112 58h2M115 58h1M128 58h1M131 58h1M133 58h2M138 58h8M166 58h3M170 58h1M172 58h3M176 58h3M180 58h1M182 58h1M184 58h3M188 58h3M194 58h1M0 59h1M4 59h1M7 59h2M10 59h2M13 59h2M16 59h2M22 59h1M72 59h2M75 59h2M78 59h2M88 59h2M91 59h1M97 59h2M100 59h2M103 59h3M129 59h1M132 59h3M138 59h4M143 59h1M146 59h1M166 59h1M168 59h3M172 59h1M174 59h1M176 59h1M178 59h1M182 59h1M184 59h1M186 59h1M188 59h1M190 59h1M0 60h16M17 60h1M19 60h1M21 60h3M25 60h1M28 60h1M69 60h1M71 60h3M75 60h3M79 60h2M85 60h1M88 60h2M94 60h1M96 60h1M99 60h1M101 60h2M105 60h1M128 60h4M133 60h8M142 60h4M147 60h2M150 60h1M166 60h1M170 60h3M176 60h1M178 60h1M180 60h1M182 60h1M184 60h1M186 60h1M188 60h1M190 60h1M194 60h1M0 61h1M2 61h16M19 61h1M21 61h1M26 61h1M29 61h1M32 61h1M38 61h1M68 61h3M72 61h3M76 61h12M89 61h4M94 61h1M96 61h3M100 61h2M103 61h1M105 61h1M128 61h1M130 61h1M133 61h5M139 61h3M143 61h1M145 61h2M148 61h3M166 61h1M168 61h1M172 61h1M174 61h1M176 61h3M180 61h3M184 61h1M186 61h1M188 61h1M190 61h1M192 61h1M0 62h9M10 62h3M14 62h10M26 62h5M35 62h1M37 62h1M68 62h2M71 62h4M77 62h1M79 62h2M82 62h1M84 62h3M89 62h5M95 62h1M97 62h1M100 62h2M104 62h1M128 62h2M131 62h1M135 62h1M137 62h1M139 62h5M145 62h3M150 62h1M168 62h3M172 62h2M176 62h1M178 62h1M186 62h1M188 62h1M190 62h1M192 62h3M196 62h1M0 63h2M3 63h9M13 63h1M15 63h2M18 63h3M24 63h1M26 63h1M31 63h2M34 63h2M39 63h1M70 63h2M73 63h2M78 63h3M82 63h2M85 63h1M87 63h1M129 63h5M135 63h1M137 63h6M144 63h1M146 63h1M149 63h1M166 63h1M168 63h1M170 63h1M172 63h1M174 63h1M176 63h1M178 63h3M182 63h3M186 63h1M188 63h1M190 63h1M196 63h1M0 64h10M11 64h1M13 64h4M25 64h2M29 64h2M33 64h1M35 64h1M38 64h1M65 64h1M71 64h1M73 64h4M78 64h1M81 64h1M88 64h2M132 64h1M135 64h1M137 64h4M142 64h1M145 64h1M165 64h2M168 64h1M170 64h1M174 64h4M180 64h3M184 64h1M188 64h1M192 64h1M0 65h4M5 65h5M11 65h1M13 65h1M21 65h1M24 65h1M27 65h2M31 65h3M35 65h3M41 65h1M64 65h1M67 65h2M70 65h1M72 65h2M75 65h1M79 65h1M84 65h2M88 65h1M137 65h2M141 65h2M145 65h2M148 65h2M166 65h1M168 65h1M170 65h1M174 65h1M176 65h1M178 65h1M180 65h1M182 65h1M184 65h1M186 65h1M188 65h1M190 65h1M192 65h1M194 65h1M197 65h1M1 66h3M8 66h2M11 66h4M16 66h5M22 66h2M27 66h2M31 66h3M35 66h1M37 66h2M42 66h1M66 66h2M69 66h2M73 66h2M76 66h2M85 66h1M88 66h1M131 66h1M133 66h5M139 66h1M142 66h5M148 66h1M150 66h1M165 66h2M168 66h1M172 66h1M176 66h1M178 66h1M180 66h1M182 66h1M185 66h2M188 66h1M191 66h1M0 67h5M6 67h3M10 67h2M13 67h7M21 67h1M28 67h2M31 67h1M34 67h3M38 67h1M41 67h1M62 67h1M66 67h1M68 67h1M70 67h2M73 67h1M75 67h1M77 67h1M85 67h4M131 67h2M134 67h6M141 67h1M143 67h1M145 67h1M147 67h1M149 67h2M166 67h1M168 67h1M170 67h1M172 67h3M176 67h1M178 67h1M180 67h1M182 67h1M184 67h1M186 67h1M188 67h1M192 67h1M194 67h1M198 67h1M0 68h4M6 68h7M14 68h3M18 68h1M20 68h1M22 68h1M29 68h1M31 68h1M33 68h1M35 68h2M38 68h2M63 68h3M67 68h1M72 68h2M75 68h3M79 68h1M81 68h1M84 68h1M86 68h1M133 68h3M138 68h1M142 68h3M146 68h1M148 68h3M152 68h1M154 68h1M156 68h3M160 68h1M162 68h1M164 68h1M166 68h1M168 68h1M172 68h1M176 68h1M180 68h1M182 68h1M184 68h1M186 68h1M188 68h1M190 68h1M192 68h1M196 68h1M198 68h1M0 69h2M3 69h2M6 69h1M9 69h4M14 69h2M19 69h3M23 69h1M25 69h2M30 69h2M34 69h1M39 69h1M61 69h2M65 69h1M69 69h1M73 69h3M77 69h1M82 69h2M85 69h1M87 69h1M141 69h1M145 69h1M150 69h1M152 69h1M154 69h1M156 69h1M161 69h2M164 69h1M166 69h1M168 69h1M170 69h1M172 69h1M174 69h1M176 69h2M180 69h1M182 69h1M184 69h1M186 69h1M188 69h1M190 69h1M193 69h2M2 70h2M7 70h8M21 70h1M23 70h2M33 70h2M39 70h1M64 70h2M68 70h1M74 70h1M76 70h2M80 70h6M142 70h1M144 70h1M146 70h1M148 70h1M150 70h1M152 70h1M154 70h1M156 70h3M160 70h1M162 70h3M166 70h1M168 70h1M170 70h1M173 70h2M176 70h5M184 70h1M188 70h1M192 70h1M194 70h1M196 70h1M198 70h1M0 71h4M5 71h4M10 71h2M13 71h1M15 71h4M20 71h3M24 71h2M28 71h1M32 71h1M34 71h2M37 71h1M42 71h1M60 71h1M62 71h3M66 71h1M69 71h1M71 71h1M75 71h3M79 71h1M83 71h3M141 71h1M143 71h1M147 71h1M149 71h2M152 71h1M154 71h1M156 71h1M158 71h1M162 71h1M164 71h1M166 71h3M170 71h1M172 71h1M174 71h1M176 71h1M178 71h1M180 71h3M184 71h1M186 71h1M188 71h1M190 71h1M192 71h1M196 71h1M0 72h1M2 72h2M5 72h8M14 72h2M17 72h1M22 72h2M25 72h1M29 72h3M33 72h2M38 72h2M57 72h1M59 72h2M64 72h1M67 72h1M69 72h2M72 72h5M80 72h1M84 72h1M144 72h1M146 72h1M148 72h1M150 72h1M152 72h1M154 72h1M156 72h1M158 72h1M160 72h1M162 72h1M164 72h1M166 72h1M168 72h1M172 72h1M174 72h1M176 72h1M178 72h1M180 72h1M182 72h1M184 72h3M188 72h1M192 72h1M194 72h1M198 72h1M0 73h1M2 73h7M10 73h2M13 73h4M19 73h1M21 73h2M26 73h1M28 73h1M30 73h1M35 73h1M38 73h1M57 73h1M59 73h2M63 73h4M70 73h1M73 73h1M75 73h3M81 73h1M83 73h1M85 73h1M141 73h1M143 73h1M145 73h1M147 73h1M149 73h2M152 73h1M154 73h1M156 73h1M158 73h1M160 73h3M164 73h1M166 73h3M170 73h3M174 73h1M176 73h1M178 73h1M180 73h1M182 73h1M184 73h1M186 73h1M188 73h1M192 73h1M194 73h1M197 73h1M1 74h6M10 74h1M15 74h2M18 74h1M23 74h1M27 74h1M30 74h2M34 74h1M38 74h1M40 74h1M58 74h3M64 74h3M69 74h2M72 74h2M75 74h3M79 74h2M83 74h2M142 74h1M146 74h1M148 74h1M150 74h1M153 74h4M158 74h1M160 74h1M162 74h1M164 74h1M166 74h1M168 74h1M170 74h3M174 74h1M180 74h1M182 74h1M184 74h1M186 74h1M188 74h3M192 74h1M196 74h1M198 74h1M1 75h1M6 75h3M13 75h1M15 75h2M19 75h2M24 75h1M27 75h1M29 75h2M33 75h1M36 75h2M39 75h1M54 75h2M61 75h4M69 75h1M71 75h2M74 75h1M78 75h1M141 75h1M145 75h1M147 75h1M149 75h2M152 75h1M154 75h3M158 75h1M160 75h1M162 75h1M164 75h1M166 75h1M170 75h3M174 75h1M176 75h1M178 75h1M180 75h1M182 75h1M184 75h7M192 75h1M196 75h1M198 75h1M0 76h1M3 76h1M6 76h1M11 76h2M19 76h1M23 76h1M26 76h3M31 76h1M37 76h1M54 76h1M57 76h1M61 76h1M65 76h1M68 76h1M70 76h2M74 76h1M76 76h1M142 76h1M144 76h1M146 76h1M148 76h1M150 76h1M154 76h3M158 76h5M164 76h1M166 76h1M168 76h1M170 76h1M172 76h1M174 76h3M178 76h1M180 76h1M182 76h1M184 76h1M186 76h1M188 76h1M190 76h1M194 76h1M196 76h1M0 77h1M2 77h2M5 77h1M10 77h4M15 77h1M17 77h4M27 77h2M53 77h1M55 77h1M61 77h1M69 77h1M77 77h2M141 77h1M143 77h1M149 77h3M154 77h3M158 77h1M160 77h1M162 77h1M164 77h1M166 77h1M168 77h1M170 77h1M172 77h1M174 77h3M178 77h1M180 77h1M186 77h1M188 77h1M190 77h1M194 77h1M5 78h1M8 78h2M11 78h1M19 78h1M22 78h3M26 78h2M30 78h4M37 78h1M54 78h2M57 78h1M61 78h1M63 78h1M66 78h2M150 78h3M154 78h1M156 78h1M158 78h1M160 78h1M162 78h1M164 78h1M166 78h2M170 78h1M172 78h1M174 78h1M176 78h3M180 78h1M182 78h1M184 78h3M188 78h1M190 78h1M192 78h1M194 78h1M0 79h1M3 79h2M6 79h6M13 79h3M17 79h2M24 79h2M27 79h4M33 79h3M37 79h3M51 79h2M56 79h2M60 79h1M62 79h1M64 79h2M67 79h1M71 79h1M150 79h1M152 79h1M154 79h3M158 79h1M160 79h1M162 79h3M166 79h1M170 79h1M172 79h1M174 79h2M178 79h1M180 79h3M184 79h1M186 79h1M188 79h1M192 79h1M194 79h1M196 79h3M3 80h1M5 80h1M8 80h1M10 80h1M13 80h2M17 80h2M20 80h2M24 80h2M29 80h1M32 80h1M35 80h1M38 80h1M49 80h2M53 80h1M55 80h2M59 80h1M67 80h1M69 80h1M72 80h1M150 80h3M154 80h1M156 80h1M159 80h2M164 80h1M166 80h1M168 80h1M170 80h1M172 80h1M174 80h1M178 80h1M180 80h1M182 80h1M184 80h1M186 80h4M192 80h1M194 80h1M3 81h1M6 81h1M11 81h2M14 81h3M19 81h1M21 81h2M27 81h1M34 81h3M46 81h1M51 81h3M58 81h3M62 81h3M67 81h1M69 81h1M72 81h2M176 81h1M179 81h2M1 82h1M3 82h2M7 82h1M16 82h2M21 82h3M26 82h1M28 82h1M31 82h1M37 82h1M39 82h1M43 82h2M48 82h1M52 82h1M54 82h5M62 82h1M64 82h3M68 82h1M138 82h1M146 82h1M156 82h1M176 82h1M0 83h1M2 83h3M7 83h1M15 83h2M18 83h2M23 83h1M25 83h2M28 83h1M33 83h2M37 83h2M43 83h1M50 83h1M53 83h1M56 83h3M63 83h2M66 83h1M70 83h3M131 83h2M138 83h1M145 83h1M148 83h1M167 83h1M170 83h1M175 83h1M178 83h2M183 83h1M185 83h1M1 84h2M8 84h2M12 84h1M16 84h4M22 84h2M27 84h1M31 84h1M33 84h1M35 84h2M40 84h1M42 84h2M45 84h1M50 84h3M61 84h2M64 84h5M70 84h1M133 84h1M135 84h3M139 84h1M148 84h1M157 84h1M164 84h1M169 84h3M173 84h3M180 84h3M184 84h1M186 84h1M4 85h4M10 85h3M14 85h1M19 85h1M23 85h1M25 85h5M31 85h1M34 85h1M36 85h1M38 85h1M41 85h1M43 85h3M55 85h3M65 85h1M67 85h4M136 85h1M140 85h3M148 85h1M165 85h1M169 85h2M177 85h1M183 85h1M185 85h1M0 86h1M3 86h1M5 86h1M11 86h1M13 86h2M22 86h2M25 86h3M30 86h3M34 86h1M39 86h6M47 86h6M54 86h2M58 86h1M60 86h2M63 86h2M67 86h3M132 86h1M134 86h1M137 86h1M140 86h1M147 86h1M153 86h1M158 86h1M162 86h1M170 86h1M172 86h1M174 86h1M177 86h1M179 86h1M184 86h2M1 87h1M3 87h7M11 87h1M13 87h2M17 87h1M22 87h1M25 87h1M27 87h5M33 87h2M36 87h4M41 87h6M48 87h3M54 87h2M57 87h1M62 87h2M65 87h2M69 87h1M133 87h1M137 87h1M141 87h1M149 87h1M170 87h2M175 87h1M180 87h1M182 87h1M1 88h6M11 88h1M13 88h3M18 88h2M23 88h1M26 88h4M35 88h2M38 88h1M41 88h9M52 88h1M57 88h4M62 88h1M65 88h1M67 88h1M127 88h1M138 88h1M140 88h1M142 88h1M146 88h1M148 88h1M150 88h1M155 88h1M162 88h1M165 88h4M170 88h2M174 88h1M176 88h1M182 88h1M0 89h7M9 89h1M11 89h1M14 89h2M20 89h1M24 89h1M27 89h2M33 89h6M40 89h10M52 89h1M54 89h3M59 89h1M63 89h1M134 89h1M139 89h1M141 89h1M143 89h1M145 89h1M147 89h1M149 89h1M172 89h2M181 89h1M189 89h1M192 89h2M195 89h1M1 90h5M7 90h2M10 90h2M13 90h2M16 90h3M21 90h1M23 90h1M28 90h4M33 90h1M35 90h1M37 90h5M43 90h4M48 90h2M53 90h2M56 90h3M63 90h2M121 90h1M134 90h1M140 90h1M142 90h1M144 90h1M146 90h1M148 90h1M150 90h1M155 90h1M161 90h2M166 90h1M168 90h5M191 90h1M198 90h1M0 91h2M3 91h1M5 91h1M7 91h2M10 91h3M14 91h1M17 91h1M19 91h1M21 91h2M24 91h1M28 91h2M32 91h1M34 91h2M37 91h6M44 91h6M59 91h2M62 91h1M133 91h2M136 91h1M139 91h3M143 91h1M145 91h1M149 91h1M155 91h1M167 91h1M169 91h1M174 91h1M176 91h2M182 91h1M188 91h1M0 92h2M5 92h1M7 92h3M11 92h4M17 92h1M19 92h4M25 92h1M31 92h6M38 92h1M40 92h8M49 92h1M126 92h1M134 92h1M140 92h1M142 92h1M144 92h1M146 92h1M148 92h1M150 92h1M163 92h1M169 92h1M173 92h1M176 92h1M178 92h3M182 92h1M197 92h1M0 93h1M3 93h4M8 93h1M11 93h1M19 93h2M22 93h1M24 93h2M30 93h1M33 93h2M37 93h2M42 93h1M44 93h4M137 93h1M139 93h1M141 93h1M143 93h1M147 93h1M149 93h1M152 93h1M169 93h1M176 93h3M7 94h1M13 94h4M19 94h2M24 94h1M29 94h1M31 94h1M33 94h2M36 94h1M38 94h2M43 94h1M46 94h2M136 94h1M138 94h1M140 94h1M142 94h1M144 94h1M146 94h1M148 94h1M150 94h1M153 94h1M164 94h1M168 94h1M178 94h1M180 94h3M0 95h1M2 95h2M5 95h3M10 95h1M13 95h1M15 95h2M18 95h2M22 95h1M26 95h2M29 95h2M39 95h1M41 95h1M44 95h2M48 95h2M52 95h1M54 95h1M136 95h1M139 95h1M143 95h1M145 95h1M147 95h1M149 95h1M194 95h1M2 96h2M5 96h1M8 96h2M13 96h1M18 96h1M22 96h1M25 96h1M27 96h1M29 96h1M34 96h2M39 96h1M43 96h1M45 96h1M47 96h1M49 96h1M122 96h1M137 96h1M139 96h2M142 96h1M144 96h1M146 96h1M150 96h1M166 96h1M172 96h1M176 96h1M182 96h1M184 96h2M0 97h1M2 97h1M5 97h1M9 97h1M11 97h7M19 97h2M25 97h3M29 97h6M39 97h2M45 97h1M121 97h1M138 97h1M141 97h1M143 97h1M145 97h1M149 97h1M151 97h1M168 97h1M177 97h1M190 97h1M0 98h1M2 98h1M7 98h1M10 98h1M13 98h3M17 98h1M20 98h1M22 98h1M24 98h4M33 98h1M36 98h3M46 98h2M51 98h2M144 98h1M146 98h1M155 98h2M166 98h1M169 98h2M178 98h1M1 99h2M5 99h3M9 99h2M12 99h2M16 99h2M21 99h1M23 99h1M25 99h3M31 99h1M34 99h1M36 99h1M38 99h1M40 99h2M43 99h1M49 99h1M51 99h1M53 99h1M127 99h1M143 99h1M147 99h1M149 99h1M151 99h1M165 99h1M201 99h2M0 100h3M4 100h2M10 100h1M13 100h1M19 100h4M24 100h5M31 100h2M34 100h2M38 100h1M41 100h2M44 100h2M47 100h1M49 100h1M116 100h1M144 100h1M148 100h1M150 100h1M152 100h1M157 100h2M160 100h1M166 100h1M171 100h1M175 100h1M0 101h2M5 101h1M7 101h5M14 101h1M16 101h2M19 101h1M21 101h1M25 101h2M28 101h2M31 101h2M34 101h1M36 101h1M38 101h4M45 101h1M47 101h3M54 101h1M120 101h1M143 101h1M147 101h1M149 101h1M178 101h1M182 101h1M200 101h1M0 102h3M7 102h3M11 102h1M14 102h2M17 102h2M21 102h3M25 102h1M27 102h4M32 102h3M37 102h1M42 102h1M47 102h2M95 102h1M104 102h1M121 102h1M144 102h1M150 102h1M171 102h1M176 102h1M183 102h1M185 102h1M2 103h2M5 103h2M11 103h2M17 103h1M20 103h3M24 103h2M28 103h1M31 103h1M34 103h1M36 103h1M40 103h2M43 103h1M54 103h1M147 103h1M151 103h1M160 103h1M168 103h1M176 103h1M195 103h1M4 104h2M8 104h1M10 104h1M13 104h3M19 104h7M28 104h2M32 104h1M34 104h4M39 104h2M46 104h1M96 104h1M121 104h1M124 104h1M148 104h1M185 104h2M2 105h1M6 105h3M10 105h3M14 105h1M16 105h2M22 105h1M24 105h1M32 105h1M43 105h1M45 105h1M127 105h1M145 105h1M147 105h1M149 105h1M151 105h1M2 106h3M8 106h2M13 106h2M16 106h1M18 106h1M24 106h1M35 106h1M37 106h2M43 106h1M111 106h1M148 106h1M191 106h1M0 107h6M11 107h1M14 107h3M19 107h1M24 107h3M28 107h1M35 107h2M147 107h1M151 107h1M177 107h2M183 107h1M0 108h3M4 108h1M12 108h1M14 108h1M23 108h1M25 108h1M32 108h1M35 108h1M117 108h1M177 108h1M179 108h1M182 108h2M1 109h1M6 109h1M8 109h1M11 109h1M14 109h2M18 109h1M22 109h1M26 109h1M28 109h2M33 109h1M35 109h1M108 109h1M0 110h2M3 110h2M6 110h1M9 110h1M16 110h1M19 110h3M26 110h2M30 110h1M32 110h2M96 110h1M98 110h1M161 110h1M187 110h1M200 110h1M4 111h1M8 111h1M10 111h1M12 111h1M14 111h3M20 111h1M22 111h1M28 111h2M0 112h2M6 112h1M9 112h1M11 112h3M15 112h2M19 112h2M22 112h3M26 112h1M107 112h1M158 112h1M160 112h1M162 112h1M177 112h1M179 112h1M202 112h1M3 113h1M7 113h2M10 113h1M17 113h2M20 113h1M22 113h1M24 113h1M102 113h1M157 113h1M159 113h1M161 113h1M163 113h1M181 113h1M203 113h1M0 114h2M5 114h2M9 114h1M11 114h1M13 114h3M21 114h2M106 114h1M118 114h1M158 114h1M160 114h1M162 114h1M164 114h1M187 114h1M194 114h1M2 115h2M6 115h4M12 115h5M19 115h1M22 115h1M99 115h1M111 115h1M151 115h1M155 115h1M157 115h1M159 115h1M161 115h1M163 115h1M194 115h1M204 115h1M2 116h1M4 116h1M6 116h1M8 116h2M13 116h2M16 116h3M21 116h1M141 116h1M146 116h1M148 116h1M150 116h1M152 116h1M154 116h1M156 116h1M158 116h1M160 116h1M162 116h1M164 116h1M188 116h1M9 117h3M14 117h2M18 117h1M22 117h1M79 117h1M141 117h1M143 117h1M145 117h1M147 117h1M149 117h1M151 117h1M153 117h1M155 117h1M157 117h1M159 117h1M161 117h1M163 117h1M165 117h1M0 118h1M3 118h7M15 118h3M19 118h1M22 118h1M138 118h1M140 118h1M142 118h1M144 118h1M146 118h1M148 118h1M150 118h1M152 118h1M154 118h1M158 118h1M160 118h1M162 118h1M164 118h1M180 118h2M184 118h1M2 119h1M4 119h2M8 119h4M14 119h1M17 119h1M19 119h3M139 119h1M141 119h1M143 119h1M145 119h1M147 119h1M149 119h1M151 119h1M153 119h1M155 119h1M157 119h1M159 119h1M161 119h1M163 119h1M165 119h1M180 119h1M184 119h1M194 119h1M0 120h1M4 120h1M6 120h2M10 120h1M14 120h2M18 120h4M136 120h1M138 120h1M140 120h1M144 120h1M146 120h1M148 120h1M150 120h1M152 120h1M154 120h1M156 120h1M158 120h1M160 120h1M162 120h1M164 120h1M180 120h1M183 120h1M190 120h1M0 121h5M6 121h4M12 121h1M18 121h5M137 121h1M139 121h1M141 121h1M143 121h1M145 121h1M147 121h1M149 121h1M151 121h1M153 121h1M157 121h1M159 121h1M161 121h1M163 121h1M165 121h1M184 121h2M191 121h1M0 122h4M6 122h2M9 122h1M12 122h3M16 122h3M22 122h1M134 122h1M136 122h1M138 122h1M140 122h1M142 122h1M144 122h1M146 122h1M148 122h1M150 122h1M152 122h1M154 122h1M158 122h1M162 122h1M164 122h1M182 122h1M184 122h2M7 123h2M10 123h3M17 123h1M20 123h1M22 123h1M135 123h1M137 123h1M139 123h1M141 123h1M143 123h1M145 123h1M147 123h1M149 123h1M151 123h1M153 123h1M155 123h1M157 123h1M159 123h1M161 123h1M163 123h1M165 123h1M184 123h1M196 123h1M1 124h2M6 124h2M9 124h1M11 124h1M13 124h1M15 124h3M136 124h1M140 124h1M142 124h1M144 124h1M146 124h1M148 124h1M150 124h1M152 124h1M154 124h1M156 124h1M158 124h1M160 124h1M162 124h1M164 124h1M166 124h1M189 124h1M0 125h2M6 125h2M9 125h1M12 125h1M14 125h1M16 125h3M137 125h1M139 125h1M141 125h1M143 125h1M145 125h1M147 125h1M149 125h1M151 125h1M153 125h1M155 125h1M157 125h1M159 125h1M161 125h1M163 125h1M165 125h1M185 125h1M1 126h2M5 126h1M7 126h2M14 126h1M17 126h1M138 126h1M140 126h1M142 126h1M144 126h1M146 126h1M148 126h1M150 126h1M152 126h1M154 126h1M156 126h1M158 126h1M160 126h1M162 126h1M164 126h1M166 126h1M184 126h2M1 127h3M5 127h1M14 127h2M17 127h2M141 127h1M143 127h1M145 127h1M147 127h1M149 127h1M151 127h1M153 127h1M155 127h1M157 127h1M159 127h1M161 127h1M163 127h1M165 127h1M184 127h1M0 128h3M4 128h1M6 128h2M9 128h2M12 128h3M16 128h1M140 128h1M142 128h1M146 128h1M148 128h1M150 128h1M152 128h1M154 128h1M156 128h1M158 128h1M160 128h1M162 128h1M164 128h1M166 128h1M184 128h2M2 129h1M4 129h4M10 129h1M12 129h2M15 129h1M139 129h1M141 129h1M143 129h1M145 129h1M147 129h1M149 129h1M153 129h1M155 129h1M157 129h1M159 129h1M161 129h1M165 129h1M185 129h1M1 130h2M4 130h4M9 130h4M14 130h1M118 130h1M140 130h1M142 130h1M144 130h1M146 130h1M148 130h1M150 130h1M152 130h1M154 130h1M156 130h1M158 130h1M160 130h1M162 130h1M164 130h1M166 130h1M184 130h1M0 131h1M3 131h5M9 131h5M15 131h2M139 131h1M141 131h1M143 131h1M145 131h1M147 131h1M149 131h1M151 131h1M155 131h1M157 131h1M159 131h1M161 131h1M163 131h1M165 131h1M167 131h1M185 131h1M0 132h2M5 132h2M8 132h2M11 132h6M136 132h1M140 132h1M142 132h1M144 132h1M146 132h1M148 132h1M150 132h1M152 132h1M154 132h1M156 132h1M158 132h1M160 132h1M162 132h1M164 132h1M166 132h1M184 132h3M3 133h5M9 133h1M14 133h1M116 133h1M134 133h1M136 133h1M139 133h1M141 133h1M145 133h1M147 133h1M149 133h1M151 133h1M153 133h1M155 133h1M159 133h1M161 133h1M163 133h1M165 133h1M167 133h1M7 134h1M10 134h2M15 134h1M140 134h1M142 134h1M144 134h1M146 134h1M148 134h1M150 134h1M152 134h1M154 134h1M156 134h1M158 134h1M160 134h1M162 134h1M164 134h1M166 134h1M168 134h1M184 134h3M0 135h1M2 135h1M4 135h2M7 135h2M10 135h2M136 135h1M141 135h1M143 135h1M145 135h1M147 135h1M149 135h1M151 135h1M153 135h1M155 135h1M157 135h1M159 135h1M161 135h1M163 135h1M165 135h1M167 135h1M185 135h1M0 136h1M2 136h1M5 136h1M14 136h1M136 136h1M140 136h1M142 136h1M144 136h1M146 136h1M148 136h1M150 136h1M152 136h1M154 136h1M156 136h1M158 136h1M160 136h1M162 136h1M164 136h1M166 136h1M168 136h1M185 136h1M0 137h1M3 137h1M5 137h3M9 137h1M11 137h2M136 137h1M139 137h1M141 137h1M143 137h1M145 137h1M147 137h1M151 137h1M155 137h1M157 137h1M159 137h1M161 137h1M163 137h1M165 137h1M167 137h1M193 137h1M2 138h1M7 138h1M113 138h1M126 138h1M136 138h2M140 138h1M142 138h1M144 138h1M146 138h1M148 138h1M150 138h1M152 138h1M154 138h1M156 138h1M158 138h1M160 138h1M162 138h1M164 138h1M166 138h1M168 138h1M184 138h3M191 138h1M0 139h4M6 139h4M11 139h1M125 139h1M137 139h1M139 139h1M141 139h1M143 139h1M145 139h1M147 139h1M149 139h1M151 139h1M153 139h1M155 139h1M157 139h1M159 139h1M161 139h1M163 139h1M165 139h1M167 139h1M169 139h1M185 139h1M195 139h2M0 140h1M2 140h1M5 140h2M8 140h1M10 140h1M112 140h1M122 140h1M124 140h1M136 140h2M140 140h1M142 140h1M144 140h1M146 140h1M148 140h1M150 140h1M152 140h1M154 140h1M158 140h1M160 140h1M162 140h1M164 140h1M166 140h1M168 140h1M185 140h2M189 140h2M195 140h1M0 141h1M4 141h1M7 141h2M139 141h1M141 141h1M143 141h1M145 141h1M147 141h1M149 141h1M151 141h1M153 141h1M155 141h1M157 141h1M159 141h1M161 141h1M163 141h1M165 141h1M167 141h1M169 141h1M185 141h1M189 141h1M195 141h1M206 141h1M3 142h1M6 142h2M140 142h1M142 142h1M144 142h1M146 142h1M148 142h1M150 142h1M152 142h1M156 142h1M158 142h1M160 142h1M162 142h1M164 142h1M166 142h1M168 142h1M184 142h1M186 142h1M2 143h1M9 143h1M141 143h1M143 143h1M145 143h1M147 143h1M149 143h1M151 143h1M153 143h1M155 143h1M157 143h1M159 143h1M161 143h1M165 143h1M167 143h1M169 143h1M191 143h1M194 143h1M0 144h1M2 144h1M5 144h1M140 144h1M142 144h1M144 144h1M146 144h1M148 144h1M150 144h1M152 144h1M154 144h1M156 144h1M160 144h1M162 144h1M164 144h1M166 144h1M168 144h1M170 144h1M185 144h1M0 145h1M2 145h1M141 145h1M143 145h1M145 145h1M147 145h1M149 145h1M151 145h1M153 145h1M155 145h1M157 145h1M159 145h1M161 145h1M163 145h1M165 145h1M167 145h1M169 145h1M186 145h1M2 146h1M142 146h1M144 146h1M146 146h1M150 146h1M152 146h1M154 146h1M156 146h1M158 146h1M160 146h1M162 146h1M164 146h1M166 146h1M168 146h1M170 146h1M185 146h1M0 147h1M141 147h1M143 147h1M145 147h1M147 147h1M151 147h1M153 147h1M155 147h1M157 147h1M161 147h1M163 147h1M165 147h1M167 147h1M169 147h1M171 147h1M185 147h2M210 147h1M0 148h2M3 148h2M144 148h1M146 148h1M148 148h1M150 148h1M152 148h1M154 148h1M156 148h1M158 148h1M160 148h1M162 148h1M164 148h1M166 148h1M168 148h1M170 148h1M172 148h1M180 148h1M182 148h1M3 149h2M145 149h1M149 149h1M151 149h1M153 149h1M155 149h1M157 149h1M159 149h1M161 149h1M163 149h1M165 149h1M167 149h1M169 149h1M171 149h1M175 149h1M177 149h1M179 149h1M181 149h1M183 149h1M186 149h1M4 150h1M146 150h1M148 150h1M150 150h1M152 150h1M154 150h1M156 150h1M158 150h1M160 150h1M162 150h1M164 150h1M166 150h1M168 150h1M170 150h1M172 150h1M174 150h1M176 150h1M178 150h1M180 150h1M182 150h1M186 150h1M0 151h3M147 151h1M149 151h1M151 151h1M153 151h1M155 151h1M157 151h1M159 151h1M161 151h1M163 151h1M167 151h1M169 151h1M171 151h1M173 151h1M175 151h1M179 151h1M181 151h1M183 151h1M186 151h1M0 152h1M3 152h1M148 152h1M150 152h1M152 152h1M154 152h1M156 152h1M158 152h1M160 152h1M162 152h1M164 152h1M166 152h1M168 152h1M170 152h1M172 152h1M174 152h1M176 152h1M178 152h1M180 152h1M182 152h1M187 152h1M1 153h2M4 153h1M149 153h1M153 153h1M155 153h1M157 153h1M159 153h1M161 153h1M163 153h1M165 153h1M167 153h1M169 153h1M171 153h1M173 153h1M175 153h1M177 153h1M179 153h1M181 153h1M183 153h1M211 153h1M148 154h1M150 154h1M152 154h1M154 154h1M156 154h1M158 154h1M160 154h1M162 154h1M164 154h1M166 154h1M168 154h1M170 154h1M172 154h1M174 154h1M176 154h1M178 154h1M180 154h1M182 154h1M184 154h1M186 154h1M0 155h1M149 155h1M151 155h1M153 155h1M155 155h1M157 155h1M159 155h1M161 155h1M163 155h1M165 155h1M167 155h1M169 155h1M171 155h1M173 155h1M175 155h1M177 155h1M179 155h1M181 155h1M183 155h1M185 155h1M187 155h1M190 155h1M197 155h2M200 155h1M205 155h1M2 156h1M148 156h1M150 156h1M152 156h1M154 156h1M156 156h1M158 156h1M160 156h1M162 156h1M164 156h1M166 156h1M168 156h1M172 156h1M174 156h1M176 156h1M178 156h1M180 156h1M182 156h1M184 156h1M186 156h1M191 156h1M194 156h1M197 156h2M202 156h5M149 157h1M151 157h1M153 157h1M155 157h1M157 157h1M159 157h1M161 157h1M163 157h1M165 157h1M167 157h1M169 157h1M171 157h1M175 157h1M177 157h1M179 157h1M181 157h1M183 157h1M185 157h1M187 157h2M194 157h1M199 157h2M202 157h2M205 157h1M0 158h1M150 158h1M152 158h1M154 158h1M156 158h1M158 158h1M160 158h1M162 158h1M164 158h1M166 158h1M168 158h1M170 158h1M172 158h1M174 158h1M176 158h1M178 158h1M182 158h1M184 158h3M188 158h1M191 158h1M193 158h3M0 159h1M149 159h1M151 159h1M153 159h1M155 159h1M157 159h1M159 159h1M161 159h1M163 159h1M167 159h1M169 159h1M171 159h1M173 159h1M175 159h1M177 159h1M179 159h1M181 159h1M183 159h1M185 159h1M187 159h3M192 159h1M194 159h1M196 159h1M199 159h6M206 159h1M1 160h1M148 160h1M150 160h1M152 160h1M154 160h1M156 160h1M158 160h1M162 160h1M164 160h1M166 160h1M168 160h1M170 160h1M172 160h1M174 160h1M176 160h1M178 160h1M180 160h1M182 160h1M186 160h1M188 160h1M192 160h5M198 160h1M200 160h1M206 160h1M1 161h1M149 161h1M151 161h1M153 161h1M155 161h1M159 161h1M161 161h1M163 161h1M165 161h1M167 161h1M169 161h1M171 161h1M173 161h1M175 161h1M177 161h1M181 161h1M185 161h1M187 161h1M189 161h1M191 161h1M195 161h2M198 161h1M200 161h1M204 161h1M206 161h1M0 162h2M150 162h1M152 162h1M154 162h1M156 162h1M158 162h1M160 162h1M162 162h1M164 162h1M166 162h1M168 162h1M170 162h1M172 162h1M174 162h1M176 162h1M178 162h1M180 162h1M182 162h1M184 162h1M186 162h1M188 162h2M191 162h2M197 162h2M200 162h1M202 162h1M204 162h2M207 162h1M1 163h1M149 163h1M151 163h1M153 163h1M155 163h1M157 163h1M159 163h1M161 163h1M165 163h1M167 163h1M169 163h1M171 163h1M173 163h1M175 163h1M177 163h1M179 163h1M181 163h1M183 163h1M185 163h2M189 163h1M194 163h1M197 163h1M199 163h2M202 163h1M205 163h1M207 163h1M152 164h1M154 164h1M156 164h1M158 164h1M160 164h1M162 164h1M166 164h1M168 164h1M170 164h1M172 164h1M174 164h1M176 164h1M178 164h1M180 164h1M182 164h1M184 164h1M186 164h1M188 164h1M192 164h3M196 164h1M199 164h2M204 164h2M209 164h3M153 165h1M155 165h1M157 165h1M159 165h1M161 165h1M163 165h1M165 165h1M167 165h1M169 165h1M171 165h1M173 165h1M175 165h1M177 165h1M179 165h1M181 165h1M183 165h1M185 165h1M187 165h1M189 165h1M194 165h1M202 165h3M207 165h1M210 165h1M213 165h1M152 166h1M154 166h1M156 166h1M158 166h1M160 166h1M162 166h1M164 166h1M166 166h1M170 166h1M172 166h1M174 166h1M176 166h1M178 166h1M180 166h1M182 166h1M184 166h1M186 166h3M191 166h1M197 166h1M200 166h1M202 166h3M206 166h1M0 167h1M153 167h1M155 167h1M157 167h1M159 167h1M161 167h1M163 167h1M165 167h1M167 167h1M169 167h1M171 167h1M173 167h1M175 167h1M177 167h1M179 167h1M181 167h1M183 167h1M185 167h1M187 167h1M189 167h1M196 167h1M200 167h1M206 167h3M212 167h1M0 168h2M3 168h1M5 168h2M154 168h1M156 168h1M158 168h1M160 168h1M162 168h1M164 168h1M166 168h1M168 168h1M170 168h1M172 168h1M174 168h1M176 168h1M178 168h1M180 168h1M182 168h1M186 168h1M188 168h1M190 168h1M193 168h4M200 168h1M204 168h1M209 168h2M3 169h2M7 169h2M153 169h1M157 169h1M159 169h1M161 169h1M165 169h1M169 169h1M173 169h1M175 169h1M177 169h1M179 169h1M181 169h1M185 169h1M187 169h1M189 169h1M193 169h1M196 169h1M206 169h1M208 169h1M2 170h2M6 170h1M8 170h2M154 170h1M156 170h1M158 170h1M160 170h1M162 170h1M164 170h1M166 170h1M168 170h1M170 170h1M172 170h1M174 170h1M176 170h1M178 170h1M180 170h1M182 170h1M184 170h1M186 170h1M188 170h1M190 170h1M193 170h1M196 170h2M199 170h3M208 170h1M213 170h2M0 171h1M5 171h1M10 171h1M157 171h1M159 171h1M161 171h1M163 171h1M165 171h1M167 171h1M169 171h1M171 171h1M173 171h1M175 171h1M177 171h1M179 171h1M181 171h1M183 171h1M185 171h1M187 171h3M192 171h2M196 171h1M200 171h1M202 171h1M209 171h1M211 171h1M214 171h1M6 172h1M8 172h1M10 172h1M156 172h1M158 172h1M160 172h1M162 172h1M164 172h1M166 172h1M168 172h1M170 172h1M172 172h1M174 172h1M176 172h1M178 172h1M180 172h1M182 172h1M184 172h1M186 172h1M188 172h1M192 172h3M198 172h1M208 172h1M210 172h2M1 173h1M5 173h2M8 173h2M11 173h2M157 173h1M159 173h1M161 173h1M163 173h1M165 173h1M167 173h1M169 173h1M171 173h1M173 173h1M175 173h1M177 173h1M179 173h1M181 173h1M183 173h3M187 173h1M192 173h1M194 173h1M198 173h1M201 173h1M204 173h1M206 173h1M212 173h1M0 174h2M5 174h2M8 174h1M11 174h2M158 174h1M160 174h1M162 174h1M164 174h1M166 174h1M168 174h1M170 174h1M172 174h1M174 174h1M176 174h1M178 174h1M180 174h1M182 174h1M184 174h3M188 174h1M192 174h1M196 174h2M200 174h1M207 174h3M212 174h1M214 174h2M2 175h2M5 175h2M12 175h2M157 175h1M159 175h1M161 175h1M163 175h1M165 175h1M167 175h1M169 175h1M171 175h1M173 175h1M175 175h1M177 175h1M179 175h1M181 175h1M183 175h1M185 175h1M187 175h1M191 175h1M193 175h2M200 175h1M202 175h1M204 175h1M206 175h1M211 175h1M214 175h1M0 176h2M3 176h5M9 176h2M13 176h1M15 176h1M160 176h1M162 176h1M164 176h1M166 176h1M170 176h1M172 176h1M174 176h1M176 176h1M178 176h1M180 176h1M182 176h1M184 176h1M186 176h1M191 176h1M195 176h2M199 176h2M204 176h1M206 176h3M210 176h2M215 176h1M0 177h3M5 177h5M13 177h2M159 177h1M161 177h1M163 177h1M165 177h1M167 177h1M169 177h1M171 177h1M173 177h1M175 177h1M177 177h1M179 177h1M181 177h1M183 177h1M185 177h1M193 177h1M196 177h2M200 177h1M206 177h3M213 177h1M0 178h3M5 178h4M13 178h1M160 178h1M162 178h1M164 178h1M166 178h1M168 178h1M170 178h1M172 178h1M174 178h1M176 178h1M178 178h1M180 178h1M182 178h5M190 178h1M193 178h1M201 178h1M204 178h1M206 178h1M212 178h2M215 178h1M0 179h6M8 179h2M13 179h1M15 179h3M161 179h1M163 179h1M165 179h1M167 179h1M169 179h1M171 179h1M173 179h1M175 179h1M177 179h1M179 179h1M182 179h5M190 179h1M195 179h1M204 179h1M206 179h1M210 179h1M212 179h1M0 180h1M3 180h1M5 180h3M11 180h1M13 180h2M16 180h1M160 180h1M162 180h1M164 180h1M166 180h1M168 180h1M170 180h1M172 180h1M174 180h1M176 180h1M178 180h1M180 180h1M182 180h1M184 180h1M193 180h1M198 180h2M202 180h5M210 180h1M212 180h1M214 180h2M0 181h1M2 181h1M9 181h1M11 181h1M13 181h2M20 181h1M161 181h1M163 181h1M165 181h1M167 181h1M169 181h1M171 181h1M173 181h1M175 181h1M177 181h1M179 181h1M181 181h1M183 181h3M189 181h5M196 181h1M200 181h1M203 181h1M206 181h4M212 181h3M2 182h1M6 182h1M10 182h3M19 182h2M22 182h1M162 182h1M166 182h1M168 182h1M170 182h1M172 182h1M174 182h1M176 182h1M178 182h1M180 182h1M184 182h1M186 182h2M189 182h2M193 182h1M196 182h1M199 182h1M204 182h1M206 182h1M208 182h2M211 182h1M214 182h1M2 183h2M6 183h2M9 183h4M15 183h1M21 183h1M23 183h1M27 183h1M163 183h1M165 183h1M167 183h1M169 183h1M171 183h1M173 183h1M175 183h1M177 183h1M179 183h1M181 183h1M183 183h1M185 183h2M188 183h1M191 183h2M194 183h1M196 183h1M198 183h1M200 183h1M204 183h1M207 183h2M211 183h5M2 184h1M4 184h1M6 184h2M13 184h1M17 184h1M20 184h4M27 184h2M32 184h1M162 184h1M164 184h1M166 184h1M168 184h1M170 184h1M172 184h1M174 184h1M176 184h1M178 184h1M180 184h1M182 184h1M184 184h2M188 184h3M192 184h5M199 184h2M203 184h2M210 184h1M212 184h1M215 184h1M1 185h2M5 185h3M9 185h1M12 185h1M14 185h4M19 185h4M25 185h1M28 185h3M163 185h1M165 185h1M167 185h1M169 185h1M171 185h1M173 185h1M175 185h1M177 185h1M179 185h1M181 185h1M183 185h1M186 185h2M189 185h4M194 185h4M201 185h2M204 185h1M207 185h1M210 185h1M214 185h1M0 186h1M5 186h3M11 186h2M14 186h2M18 186h1M26 186h2M162 186h1M164 186h1M166 186h1M168 186h1M170 186h1M172 186h1M174 186h1M176 186h1M178 186h1M180 186h1M183 186h1M185 186h1M189 186h2M192 186h1M194 186h3M205 186h3M212 186h3M7 187h2M10 187h1M12 187h1M18 187h2M21 187h2M27 187h1M29 187h1M163 187h1M165 187h1M167 187h1M169 187h1M171 187h1M173 187h1M175 187h1M177 187h1M179 187h1M181 187h1M184 187h1M186 187h1M188 187h1M190 187h2M193 187h2M197 187h2M200 187h1M203 187h7M211 187h1M214 187h1M0 188h2M3 188h1M8 188h8M20 188h5M27 188h2M162 188h1M164 188h1M166 188h1M170 188h1M172 188h1M174 188h1M176 188h1M178 188h1M180 188h1M182 188h2M185 188h2M189 188h8M205 188h3M210 188h2M214 188h1M1 189h2M4 189h1M7 189h2M10 189h4M15 189h6M24 189h1M28 189h1M163 189h1M165 189h1M167 189h1M171 189h1M173 189h1M175 189h1M177 189h1M179 189h1M181 189h1M186 189h1M188 189h2M191 189h1M197 189h1M200 189h2M203 189h9M213 189h2M2 190h2M5 190h4M12 190h2M15 190h2M18 190h2M22 190h1M164 190h1M166 190h1M168 190h1M170 190h1M172 190h1M174 190h1M176 190h1M178 190h1M180 190h1M182 190h1M184 190h3M190 190h1M192 190h7M200 190h1M202 190h2M205 190h2M208 190h3M214 190h1"/>
<path stroke="#80e4b4" d="M2 0h2M2 1h2M135 3h1M1 4h2M7 4h3M4 5h6M14 5h1M14 8h1M12 9h1M187 10h1M176 11h1M177 16h1M190 16h1M191 22h1M188 25h1M192 29h1M4 32h1M99 45h1M192 52h1M122 54h1M24 61h1M40 65h1M171 67h1M10 83h1M13 84h1M16 86h1M199 87h2M194 89h1M189 91h3M193 92h2M200 92h2M36 102h1M39 102h1M19 125h2M21 126h2M138 127h1M138 128h1M18 129h2M138 129h1M168 129h1M138 130h1M168 130h1M138 131h1M138 132h1M16 133h1M138 133h1M16 134h1M138 134h1M169 134h1M16 135h1M138 135h1M169 135h1M13 136h1M15 136h2M138 136h1M169 136h1M14 137h1M138 137h1M14 138h1M138 138h1M170 138h1M13 139h1M170 139h1M12 140h1M170 140h1M11 141h1M170 141h1M10 142h1M170 142h1M171 143h1M8 144h1M171 144h1M6 145h2M171 145h1M6 146h1M142 148h2M173 149h2M176 149h1M147 152h1M147 153h1M192 156h1M212 156h1M148 157h1M148 158h1M148 159h1M150 164h1M151 165h2M6 167h1M153 168h1M9 169h1M154 169h2M11 171h1M13 173h1M13 174h1M14 175h2M16 176h1M158 176h1M16 177h2M18 178h1M161 178h1M19 179h1M24 181h2M26 182h1M164 182h1M164 185h1"/>
<path stroke="#80d8c4" d="M10 2h1M193 90h1M199 91h1M20 128h1M17 131h1M5 147h1M5 166h1M7 168h2M19 178h1M20 179h1M22 180h1"/>
<path stroke="#8498f0" d="M159 2h1M4 3h1M161 3h1M163 6h1M183 6h1M164 8h1M15 10h1M189 10h1M187 11h1M169 13h1M18 14h1M169 15h1M146 16h1M163 19h1M167 19h1M181 19h1M142 24h1M149 24h1M189 32h1M187 35h1M171 36h1M177 36h1M1 37h1M185 37h1M167 38h1M184 38h1M1 39h1M177 41h1M1 44h1M191 45h1M131 49h1M134 49h1M134 52h1M140 52h2M191 56h1M169 58h1M32 59h1M194 59h1M168 60h1M6 66h1M2 69h1M4 71h1M41 74h1M135 80h1M148 80h1M7 81h2M131 81h1M141 81h1M9 82h1M11 82h1M140 82h1M143 82h1M147 82h1M13 83h1M141 83h1M14 84h1M16 85h2M35 85h1M144 85h1M145 86h2M19 87h2M21 88h2M23 89h1M146 89h1M24 90h2M147 90h1M26 91h1M28 93h1M28 95h1M30 96h1M36 97h2M39 98h5M36 100h1M40 102h1M27 108h1M24 110h1M158 110h2M12 114h1M19 114h1M140 115h1M10 116h1M166 116h1M12 118h1M167 122h1M168 133h2M183 144h1M178 145h1M199 155h1M203 155h1M204 157h1M206 157h1M192 158h1M198 158h1M201 158h1M2 159h1M5 161h1M194 161h1M202 161h1M196 162h1M201 162h1M206 162h1M196 163h1M201 163h1M206 163h1M210 163h1M195 164h1M197 164h1M201 164h2M5 165h1M193 165h1M198 165h1M200 165h1M206 165h1M209 165h1M198 166h2M201 166h1M208 166h1M192 167h3M203 167h1M205 168h1M209 169h1M205 170h1M198 171h1M195 173h1M209 173h2M191 174h1M198 174h1M202 174h1M204 174h2M210 174h1M190 175h1M207 175h2M210 175h1M212 175h1M213 176h1M202 177h1M214 177h1M196 178h1M199 178h1M202 178h1M205 178h1M208 178h1M210 178h1M214 178h1M189 179h1M208 179h1M195 180h2M209 180h1M195 181h1M201 181h1M204 181h1M210 181h1M195 182h1M212 182h2M215 182h1M30 183h1M189 183h2M206 183h1M210 183h1M197 184h1M209 184h1M214 184h1M193 185h1M206 185h1M208 185h1M212 185h1M191 186h1M204 186h1M210 186h1M215 186h1M31 187h1M189 187h1M210 187h1M212 187h1M202 188h2M208 188h1M212 188h1M195 189h2M212 189h1M211 190h1"/>
<path stroke="#8c84f6" d="M185 27h1M10 82h1M12 83h1M15 84h1M18 86h2M20 88h1M22 89h1M25 91h1M26 92h2M192 170h1M213 171h1M198 175h1M199 177h1M189 178h1M205 182h1M199 187h1M215 188h1"/>
<path stroke="#c070c8" d="M142 53h1M143 54h1"/>
<path stroke="#bc84dc" d="M172 87h1M174 87h1M195 167h1M213 168h1M209 175h1M198 185h1"/>
</g></g><g filter="url(#bl)"><g transform="translate(127.10 133.50) scale(7.806)" stroke-width="1.02" fill="none">
<path stroke="#ffd080" d="M4 0h1M4 1h1M4 2h1M9 2h1M12 2h1M7 3h1M11 3h2M6 4h1M12 4h1M13 5h1M14 6h1M14 7h1M14 10h1M16 11h2M15 12h1M16 13h2M16 14h2M2 41h1M3 42h2M159 53h1M161 53h1M161 54h2M30 56h1M28 57h1M163 57h1M33 58h1M40 58h1M162 58h2M39 59h2M163 59h1M33 60h2M164 60h1M42 61h1M165 61h1M43 62h1M172 64h1M133 79h1M149 79h1M132 80h2M149 80h1M36 82h1M159 86h1M52 94h1M54 96h1M157 111h1M156 112h1M163 112h1M142 115h1M142 116h1M134 120h1M166 120h1M133 121h1M133 123h1M134 124h1M181 143h2M180 144h1M179 145h1M183 145h1M178 146h1M185 152h1M1 158h1M2 160h1M4 160h1M32 185h1M32 186h1M27 189h1"/>
<path stroke="#b4fa7a" d="M12 1h1M43 1h1M13 2h1M8 3h1M138 3h1M104 4h1M12 5h1M136 5h1M13 7h1M13 10h1M16 10h1M17 12h1M15 13h1M179 15h1M141 16h1M157 16h1M179 17h1M152 18h1M150 19h1M5 26h1M109 29h1M104 33h1M1 43h1M190 50h1M124 52h2M156 52h2M158 53h1M166 55h1M164 56h1M109 57h1M31 58h1M117 58h1M160 58h1M41 59h1M38 60h1M170 61h1M24 62h1M171 64h1M173 66h2M159 69h2M41 72h2M41 73h2M152 76h2M145 77h1M133 78h1M138 78h1M146 78h1M148 78h1M138 79h1M132 81h1M153 82h1M37 84h1M132 85h1M160 88h1M197 93h1M53 95h1M162 110h1M143 115h1M137 119h1M166 123h1M137 126h1M167 129h1M168 132h1M182 142h1M5 148h1M183 148h1M5 149h1M5 150h1M145 150h1M184 152h1M3 153h1M3 154h1M1 156h1M1 157h1M4 165h1M4 166h1M217 170h1M191 178h1M30 184h2M31 186h1M25 189h2"/>
<path stroke="#fffa82" d="M11 2h1M9 3h2M4 4h1M10 4h2M13 6h1M13 8h1M13 9h1M15 11h1M16 12h1M177 14h1M146 15h1M153 17h1M100 45h1M159 52h1M162 53h1M113 56h1M30 57h2M27 58h1M41 60h2M35 61h2M166 62h2M171 62h1M172 65h1M39 67h1M139 78h1M148 79h1M37 80h1M37 81h1M134 81h1M36 83h1M160 85h1M160 86h1M159 87h2M158 111h1M162 111h1M149 113h1M164 113h1M149 114h1M165 115h1M140 116h1M166 118h1M166 119h1M166 121h1M133 122h1M133 124h1M167 128h1M184 149h1M146 155h1M3 159h1M4 161h1"/>
<path stroke="#84f48c" d="M135 2h1M3 4h1M16 15h1M147 16h1M11 17h2M8 21h1M5 24h1M6 26h1M3 31h1M105 31h1M143 36h2M154 51h1M191 51h1M164 55h2M112 56h1M29 57h1M29 58h1M32 58h1M107 58h1M31 59h1M37 60h1M37 61h1M43 61h1M39 64h1M39 65h1M171 65h1M38 69h1M132 84h1M18 87h1M163 88h1M195 88h1M28 94h1M50 94h1M35 97h1M160 111h2M156 113h1M156 114h1M154 115h1M143 116h1M132 122h1M166 122h1M135 124h1M169 137h1M181 144h1M183 146h1M184 150h1M146 151h1M184 151h1M4 152h1M1 159h1M202 160h1M3 167h2M184 168h1M214 168h1M155 171h1M192 175h1M192 176h1M192 177h1M22 181h1M31 185h1M33 185h2M28 187h1"/>
</g></g></g>
<g filter="url(#bl3)" fill="none" stroke="#3888ec"><path stroke-opacity="0.62" stroke-width="2.3" stroke-dasharray="3.6 4.2" d="M133.0 138.1H2588.7M133.0 190.2H2588.7M133.0 242.2H2588.7M133.0 294.3H2588.7M133.0 346.4H2588.7M133.0 398.4H2588.7M133.0 450.5H2588.7M133.0 502.6H2588.7M133.0 554.7H2588.7M133.0 606.7H2588.7M133.0 658.8H2588.7M133.0 710.9H2588.7M133.0 762.9H2588.7M133.0 815.0H2588.7M133.0 867.1H2588.7M133.0 919.1H2588.7M133.0 971.2H2588.7M133.0 1023.3H2588.7M133.0 1075.4H2588.7M133.0 1127.4H2588.7M133.0 1179.5H2588.7M133.0 1231.6H2588.7M133.0 1283.6H2588.7M133.0 1335.7H2588.7M133.0 1387.8H2588.7M133.0 1439.8H2588.7M133.0 1491.9H2588.7M133.0 1544.0H2588.7M133.0 1596.1H2588.7"/><path stroke-opacity="0.68" stroke-width="2.3" stroke-dasharray="4 3.8" d="M249.4 131.3V1615.3M379.6 131.3V1615.3M509.8 131.3V1615.3M639.9 131.3V1615.3M770.1 131.3V1615.3M900.3 131.3V1615.3M1030.5 131.3V1615.3M1160.6 131.3V1615.3M1290.8 131.3V1615.3M1421.0 131.3V1615.3M1551.2 131.3V1615.3M1681.3 131.3V1615.3M1811.5 131.3V1615.3M1941.7 131.3V1615.3M2071.8 131.3V1615.3M2202.0 131.3V1615.3M2332.2 131.3V1615.3M2462.4 131.3V1615.3"/><path stroke-opacity="0.09" stroke-width="3" d="M249.4 131.3V1615.3M379.6 131.3V1615.3M509.8 131.3V1615.3M639.9 131.3V1615.3M770.1 131.3V1615.3M900.3 131.3V1615.3M1030.5 131.3V1615.3M1160.6 131.3V1615.3M1290.8 131.3V1615.3M1421.0 131.3V1615.3M1551.2 131.3V1615.3M1681.3 131.3V1615.3M1811.5 131.3V1615.3M1941.7 131.3V1615.3M2071.8 131.3V1615.3M2202.0 131.3V1615.3M2332.2 131.3V1615.3M2462.4 131.3V1615.3"/></g>
<g filter="url(#bl2)" fill="none" stroke="#2b429f" stroke-width="1.65" stroke-linejoin="round">
<path d="M1031.1 130.0L1034.3 142.3L1045.6 155.2L1057.6 161.1L1055.3 174.6L1054.3 194.7L1058.5 203.7L1068.2 202.1L1086.0 190.8L1092.5 194.7L1105.4 213.4L1102.2 221.5L1074.7 239.3L1065.0 252.2L1064.4 265.1L1069.9 279.7L1079.5 291.0L1090.9 299.1L1087.6 316.8L1081.2 333.0L1061.8 345.3L1058.5 350.8L1056.3 365.3L1061.8 378.2L1074.7 387.9L1086.0 393.1L1111.9 396.3L1141.0 388.6L1155.5 396.0L1168.4 408.9L1171.7 420.2L1163.6 433.2L1142.6 444.5L1140.0 465.5L1144.2 486.5L1174.9 505.9L1200.7 533.4L1216.9 531.7L1236.3 538.2L1249.2 554.4L1254.1 564.1L1242.8 588.3L1231.4 609.3L1227.2 614.5L1221.7 642.0L1220.1 664.6L1220.1 690.5L1225.0 722.8L1234.7 758.4"/>
<path d="M1234.7 758.4L1233.1 781.0L1228.2 806.8L1231.4 832.7L1239.5 858.5L1252.4 887.6L1263.8 910.2L1266.0 955.5L1268.6 971.7L1294.5 1020.1L1317.1 1068.6L1337.1 1110.0L1394.6 1232.8L1420.5 1284.5L1457.3 1368.5L1500.0 1465.5L1545.2 1578.6L1554.9 1604.5L1577.6 1614.2L1584.0 1620.6"/>
<path d="M1234.7 758.4L1258.9 790.7L1284.8 819.8L1310.6 848.8L1330.0 865.0L1346.2 873.1L1381.7 878.6L1420.5 880.5L1446.4 874.7L1472.2 858.5L1488.4 853.7L1500.0 853.0L1516.2 858.5L1532.3 871.5L1545.2 890.9L1553.3 916.7L1559.8 955.5L1564.6 1004.0L1571.1 1052.4L1577.6 1110.0L1585.6 1174.6L1593.7 1265.1L1603.4 1303.9L1611.5 1368.5L1618.0 1433.2L1621.2 1455.2"/>
<path d="M1621.2 1455.2L1584.0 1520.4L1546.2 1582.5"/>
<path d="M1621.2 1455.2L1661.6 1458.4L1713.3 1460.6L1810.2 1450.0L1942.8 1444.5L2068.8 1439.6L2149.6 1436.4L2151.7 1437.1L2187.3 1422.8L2245.4 1415.4L2326.2 1408.9L2423.2 1387.9L2565.4 1359.5"/>
<path d="M2151.7 1437.1L2114.0 1468.7L2068.8 1514.0L2033.2 1543.1L1991.2 1577.0L1965.4 1589.9L1939.5 1594.8L1855.5 1609.3L1816.7 1614.8L1807.0 1617.4"/>
<path d="M1086.0 393.1L1026.2 449.3L971.3 501.0L897.0 552.8L848.5 581.8L800.0 620.0L769.0 658.2L714.0 713.1L662.3 768.1L642.9 781.0L617.1 793.9L571.8 787.4L547.6 777.7L510.4 780.0L390.9 804.6L326.2 789.1L248.7 761.6L132.3 719.6"/>
<path d="M571.8 787.4L552.4 800.4L520.1 839.2L474.9 887.6L455.5 889.2L416.7 882.8L390.9 890.9L360.2 908.6"/>
</g>
<path d="M2174.0 130.3L2201.4 167.5L2267.0 258.0L2294.7 293.3L2388.0 402.8L2461.0 481.9L2526.0 552.9L2588.7 626.0" fill="none" stroke="#74505e" stroke-width="1.9" filter="url(#bl2)"/>
<rect x="131.3" y="130.6" width="2457.1" height="1484.4" fill="none" stroke="#343e3e" stroke-width="2.1"/>
</svg>
<div class="abs" style="left:1060px;top:104px;width:600px;text-align:center;font-size:20px;line-height:24px;color:#1a1a1a;white-space:nowrap;">Total recharge to SZ (pos.down)</div>
<svg class="abs" style="left:100px;top:120px" width="2520" height="1520" viewBox="100 120 2520 1520"><g stroke="#3c3c3c" stroke-width="1.5"><path d="M124.4 138.1h6.6M127.0 148.5h4.0M127.0 158.9h4.0M127.0 169.3h4.0M127.0 179.8h4.0M124.4 190.2h6.6M127.0 200.6h4.0M127.0 211.0h4.0M127.0 221.4h4.0M127.0 231.8h4.0M124.4 242.2h6.6M127.0 252.7h4.0M127.0 263.1h4.0M127.0 273.5h4.0M127.0 283.9h4.0M124.4 294.3h6.6M127.0 304.7h4.0M127.0 315.1h4.0M127.0 325.6h4.0M127.0 336.0h4.0M124.4 346.4h6.6M127.0 356.8h4.0M127.0 367.2h4.0M127.0 377.6h4.0M127.0 388.0h4.0M124.4 398.4h6.6M127.0 408.9h4.0M127.0 419.3h4.0M127.0 429.7h4.0M127.0 440.1h4.0M124.4 450.5h6.6M127.0 460.9h4.0M127.0 471.3h4.0M127.0 481.8h4.0M127.0 492.2h4.0M124.4 502.6h6.6M127.0 513.0h4.0M127.0 523.4h4.0M127.0 533.8h4.0M127.0 544.2h4.0M124.4 554.7h6.6M127.0 565.1h4.0M127.0 575.5h4.0M127.0 585.9h4.0M127.0 596.3h4.0M124.4 606.7h6.6M127.0 617.1h4.0M127.0 627.6h4.0M127.0 638.0h4.0M127.0 648.4h4.0M124.4 658.8h6.6M127.0 669.2h4.0M127.0 679.6h4.0M127.0 690.0h4.0M127.0 700.5h4.0M124.4 710.9h6.6M127.0 721.3h4.0M127.0 731.7h4.0M127.0 742.1h4.0M127.0 752.5h4.0M124.4 762.9h6.6M127.0 773.4h4.0M127.0 783.8h4.0M127.0 794.2h4.0M127.0 804.6h4.0M124.4 815.0h6.6M127.0 825.4h4.0M127.0 835.8h4.0M127.0 846.3h4.0M127.0 856.7h4.0M124.4 867.1h6.6M127.0 877.5h4.0M127.0 887.9h4.0M127.0 898.3h4.0M127.0 908.7h4.0M124.4 919.1h6.6M127.0 929.6h4.0M127.0 940.0h4.0M127.0 950.4h4.0M127.0 960.8h4.0M124.4 971.2h6.6M127.0 981.6h4.0M127.0 992.0h4.0M127.0 1002.5h4.0M127.0 1012.9h4.0M124.4 1023.3h6.6M127.0 1033.7h4.0M127.0 1044.1h4.0M127.0 1054.5h4.0M127.0 1064.9h4.0M124.4 1075.4h6.6M127.0 1085.8h4.0M127.0 1096.2h4.0M127.0 1106.6h4.0M127.0 1117.0h4.0M124.4 1127.4h6.6M127.0 1137.8h4.0M127.0 1148.3h4.0M127.0 1158.7h4.0M127.0 1169.1h4.0M124.4 1179.5h6.6M127.0 1189.9h4.0M127.0 1200.3h4.0M127.0 1210.7h4.0M127.0 1221.2h4.0M124.4 1231.6h6.6M127.0 1242.0h4.0M127.0 1252.4h4.0M127.0 1262.8h4.0M127.0 1273.2h4.0M124.4 1283.6h6.6M127.0 1294.1h4.0M127.0 1304.5h4.0M127.0 1314.9h4.0M127.0 1325.3h4.0M124.4 1335.7h6.6M127.0 1346.1h4.0M127.0 1356.5h4.0M127.0 1367.0h4.0M127.0 1377.4h4.0M124.4 1387.8h6.6M127.0 1398.2h4.0M127.0 1408.6h4.0M127.0 1419.0h4.0M127.0 1429.4h4.0M124.4 1439.8h6.6M127.0 1450.3h4.0M127.0 1460.7h4.0M127.0 1471.1h4.0M127.0 1481.5h4.0M124.4 1491.9h6.6M127.0 1502.3h4.0M127.0 1512.7h4.0M127.0 1523.2h4.0M127.0 1533.6h4.0M124.4 1544.0h6.6M127.0 1554.4h4.0M127.0 1564.8h4.0M127.0 1575.2h4.0M127.0 1585.6h4.0M124.4 1596.1h6.6M127.0 1606.5h4.0M132.2 1615.3v4.2M145.3 1615.3v4.2M158.3 1615.3v4.2M171.3 1615.3v4.2M184.3 1615.3v4.2M197.3 1615.3v4.2M210.3 1615.3v4.2M223.4 1615.3v4.2M236.4 1615.3v4.2M249.4 1615.3v6.6M262.4 1615.3v4.2M275.4 1615.3v4.2M288.5 1615.3v4.2M301.5 1615.3v4.2M314.5 1615.3v4.2M327.5 1615.3v4.2M340.5 1615.3v4.2M353.5 1615.3v4.2M366.6 1615.3v4.2M379.6 1615.3v6.6M392.6 1615.3v4.2M405.6 1615.3v4.2M418.6 1615.3v4.2M431.6 1615.3v4.2M444.7 1615.3v4.2M457.7 1615.3v4.2M470.7 1615.3v4.2M483.7 1615.3v4.2M496.7 1615.3v4.2M509.8 1615.3v6.6M522.8 1615.3v4.2M535.8 1615.3v4.2M548.8 1615.3v4.2M561.8 1615.3v4.2M574.8 1615.3v4.2M587.9 1615.3v4.2M600.9 1615.3v4.2M613.9 1615.3v4.2M626.9 1615.3v4.2M639.9 1615.3v6.6M652.9 1615.3v4.2M666.0 1615.3v4.2M679.0 1615.3v4.2M692.0 1615.3v4.2M705.0 1615.3v4.2M718.0 1615.3v4.2M731.0 1615.3v4.2M744.1 1615.3v4.2M757.1 1615.3v4.2M770.1 1615.3v6.6M783.1 1615.3v4.2M796.1 1615.3v4.2M809.2 1615.3v4.2M822.2 1615.3v4.2M835.2 1615.3v4.2M848.2 1615.3v4.2M861.2 1615.3v4.2M874.2 1615.3v4.2M887.3 1615.3v4.2M900.3 1615.3v6.6M913.3 1615.3v4.2M926.3 1615.3v4.2M939.3 1615.3v4.2M952.3 1615.3v4.2M965.4 1615.3v4.2M978.4 1615.3v4.2M991.4 1615.3v4.2M1004.4 1615.3v4.2M1017.4 1615.3v4.2M1030.5 1615.3v6.6M1043.5 1615.3v4.2M1056.5 1615.3v4.2M1069.5 1615.3v4.2M1082.5 1615.3v4.2M1095.5 1615.3v4.2M1108.6 1615.3v4.2M1121.6 1615.3v4.2M1134.6 1615.3v4.2M1147.6 1615.3v4.2M1160.6 1615.3v6.6M1173.6 1615.3v4.2M1186.7 1615.3v4.2M1199.7 1615.3v4.2M1212.7 1615.3v4.2M1225.7 1615.3v4.2M1238.7 1615.3v4.2M1251.7 1615.3v4.2M1264.8 1615.3v4.2M1277.8 1615.3v4.2M1290.8 1615.3v6.6M1303.8 1615.3v4.2M1316.8 1615.3v4.2M1329.9 1615.3v4.2M1342.9 1615.3v4.2M1355.9 1615.3v4.2M1368.9 1615.3v4.2M1381.9 1615.3v4.2M1394.9 1615.3v4.2M1408.0 1615.3v4.2M1421.0 1615.3v6.6M1434.0 1615.3v4.2M1447.0 1615.3v4.2M1460.0 1615.3v4.2M1473.0 1615.3v4.2M1486.1 1615.3v4.2M1499.1 1615.3v4.2M1512.1 1615.3v4.2M1525.1 1615.3v4.2M1538.1 1615.3v4.2M1551.2 1615.3v6.6M1564.2 1615.3v4.2M1577.2 1615.3v4.2M1590.2 1615.3v4.2M1603.2 1615.3v4.2M1616.2 1615.3v4.2M1629.3 1615.3v4.2M1642.3 1615.3v4.2M1655.3 1615.3v4.2M1668.3 1615.3v4.2M1681.3 1615.3v6.6M1694.3 1615.3v4.2M1707.4 1615.3v4.2M1720.4 1615.3v4.2M1733.4 1615.3v4.2M1746.4 1615.3v4.2M1759.4 1615.3v4.2M1772.4 1615.3v4.2M1785.5 1615.3v4.2M1798.5 1615.3v4.2M1811.5 1615.3v6.6M1824.5 1615.3v4.2M1837.5 1615.3v4.2M1850.6 1615.3v4.2M1863.6 1615.3v4.2M1876.6 1615.3v4.2M1889.6 1615.3v4.2M1902.6 1615.3v4.2M1915.6 1615.3v4.2M1928.7 1615.3v4.2M1941.7 1615.3v6.6M1954.7 1615.3v4.2M1967.7 1615.3v4.2M1980.7 1615.3v4.2M1993.7 1615.3v4.2M2006.8 1615.3v4.2M2019.8 1615.3v4.2M2032.8 1615.3v4.2M2045.8 1615.3v4.2M2058.8 1615.3v4.2M2071.8 1615.3v6.6M2084.9 1615.3v4.2M2097.9 1615.3v4.2M2110.9 1615.3v4.2M2123.9 1615.3v4.2M2136.9 1615.3v4.2M2150.0 1615.3v4.2M2163.0 1615.3v4.2M2176.0 1615.3v4.2M2189.0 1615.3v4.2M2202.0 1615.3v6.6M2215.0 1615.3v4.2M2228.1 1615.3v4.2M2241.1 1615.3v4.2M2254.1 1615.3v4.2M2267.1 1615.3v4.2M2280.1 1615.3v4.2M2293.1 1615.3v4.2M2306.2 1615.3v4.2M2319.2 1615.3v4.2M2332.2 1615.3v6.6M2345.2 1615.3v4.2M2358.2 1615.3v4.2M2371.3 1615.3v4.2M2384.3 1615.3v4.2M2397.3 1615.3v4.2M2410.3 1615.3v4.2M2423.3 1615.3v4.2M2436.3 1615.3v4.2M2449.4 1615.3v4.2M2462.4 1615.3v6.6M2475.4 1615.3v4.2M2488.4 1615.3v4.2M2501.4 1615.3v4.2M2514.4 1615.3v4.2M2527.5 1615.3v4.2M2540.5 1615.3v4.2M2553.5 1615.3v4.2M2566.5 1615.3v4.2M2579.5 1615.3v4.2"/></g></svg>
<span class="abs ax" style="left:30px;width:89px;text-align:right;top:130.0px">-1097300</span>
<span class="abs ax" style="left:30px;width:89px;text-align:right;top:182.1px">-1097320</span>
<span class="abs ax" style="left:30px;width:89px;text-align:right;top:234.1px">-1097340</span>
<span class="abs ax" style="left:30px;width:89px;text-align:right;top:286.2px">-1097360</span>
<span class="abs ax" style="left:30px;width:89px;text-align:right;top:338.3px">-1097380</span>
<span class="abs ax" style="left:30px;width:89px;text-align:right;top:390.3px">-1097400</span>
<span class="abs ax" style="left:30px;width:89px;text-align:right;top:442.4px">-1097420</span>
<span class="abs ax" style="left:30px;width:89px;text-align:right;top:494.5px">-1097440</span>
<span class="abs ax" style="left:30px;width:89px;text-align:right;top:546.6px">-1097460</span>
<span class="abs ax" style="left:30px;width:89px;text-align:right;top:598.6px">-1097480</span>
<span class="abs ax" style="left:30px;width:89px;text-align:right;top:650.7px">-1097500</span>
<span class="abs ax" style="left:30px;width:89px;text-align:right;top:702.8px">-1097520</span>
<span class="abs ax" style="left:30px;width:89px;text-align:right;top:754.8px">-1097540</span>
<span class="abs ax" style="left:30px;width:89px;text-align:right;top:806.9px">-1097560</span>
<span class="abs ax" style="left:30px;width:89px;text-align:right;top:859.0px">-1097580</span>
<span class="abs ax" style="left:30px;width:89px;text-align:right;top:911.0px">-1097600</span>
<span class="abs ax" style="left:30px;width:89px;text-align:right;top:963.1px">-1097620</span>
<span class="abs ax" style="left:30px;width:89px;text-align:right;top:1015.2px">-1097640</span>
<span class="abs ax" style="left:30px;width:89px;text-align:right;top:1067.3px">-1097660</span>
<span class="abs ax" style="left:30px;width:89px;text-align:right;top:1119.3px">-1097680</span>
<span class="abs ax" style="left:30px;width:89px;text-align:right;top:1171.4px">-1097700</span>
<span class="abs ax" style="left:30px;width:89px;text-align:right;top:1223.5px">-1097720</span>
<span class="abs ax" style="left:30px;width:89px;text-align:right;top:1275.5px">-1097740</span>
<span class="abs ax" style="left:30px;width:89px;text-align:right;top:1327.6px">-1097760</span>
<span class="abs ax" style="left:30px;width:89px;text-align:right;top:1379.7px">-1097780</span>
<span class="abs ax" style="left:30px;width:89px;text-align:right;top:1431.8px">-1097800</span>
<span class="abs ax" style="left:30px;width:89px;text-align:right;top:1483.8px">-1097820</span>
<span class="abs ax" style="left:30px;width:89px;text-align:right;top:1535.9px">-1097840</span>
<span class="abs ax" style="left:30px;width:89px;text-align:right;top:1588.0px">-1097860</span>
<span class="abs ax" style="left:199.4px;width:100px;text-align:center;top:1627.5px">-640650</span>
<span class="abs ax" style="left:329.6px;width:100px;text-align:center;top:1627.5px">-640600</span>
<span class="abs ax" style="left:459.8px;width:100px;text-align:center;top:1627.5px">-640550</span>
<span class="abs ax" style="left:589.9px;width:100px;text-align:center;top:1627.5px">-640500</span>
<span class="abs ax" style="left:720.1px;width:100px;text-align:center;top:1627.5px">-640450</span>
<span class="abs ax" style="left:850.3px;width:100px;text-align:center;top:1627.5px">-640400</span>
<span class="abs ax" style="left:980.5px;width:100px;text-align:center;top:1627.5px">-640350</span>
<span class="abs ax" style="left:1110.6px;width:100px;text-align:center;top:1627.5px">-640300</span>
<span class="abs ax" style="left:1240.8px;width:100px;text-align:center;top:1627.5px">-640250</span>
<span class="abs ax" style="left:1371.0px;width:100px;text-align:center;top:1627.5px">-640200</span>
<span class="abs ax" style="left:1501.2px;width:100px;text-align:center;top:1627.5px">-640150</span>
<span class="abs ax" style="left:1631.3px;width:100px;text-align:center;top:1627.5px">-640100</span>
<span class="abs ax" style="left:1761.5px;width:100px;text-align:center;top:1627.5px">-640050</span>
<span class="abs ax" style="left:1891.7px;width:100px;text-align:center;top:1627.5px">-640000</span>
<span class="abs ax" style="left:2021.8px;width:100px;text-align:center;top:1627.5px">-639950</span>
<span class="abs ax" style="left:2152.0px;width:100px;text-align:center;top:1627.5px">-639900</span>
<span class="abs ax" style="left:2282.2px;width:100px;text-align:center;top:1627.5px">-639850</span>
<span class="abs ax" style="left:2412.4px;width:100px;text-align:center;top:1627.5px">-639800</span>
<span class="abs" style="left:131px;top:1651.9px;font-size:15.7px;line-height:18px;color:#333;white-space:nowrap;">09/15/24 00:00:00, Time step 24 of 24</span>
<span class="abs lg" style="left:2633px;top:1272.5px;">Total recharge to SZ</span>
<span class="abs lg" style="left:2633px;top:1291.5px;">(pos.down) [mm/day]</span>
<div class="abs" style="left:2633px;top:1310.4px;width:32px;height:18.4px;background:#ff0000;border:solid #777;border-width:2.2px 1.6px;box-sizing:border-box;"></div>
<span class="abs lg" style="left:2657px;width:50.5px;text-align:right;top:1311.6px">5400</span>
<span class="abs lg" style="left:2711.5px;top:1311.6px">-</span>
<span class="abs lg" style="left:2705px;width:50.5px;text-align:right;top:1311.6px">6000</span>
<div class="abs" style="left:2633px;top:1328.5px;width:32px;height:18.4px;background:#ff5a00;border:solid #777;border-width:2.2px 1.6px;box-sizing:border-box;"></div>
<span class="abs lg" style="left:2657px;width:50.5px;text-align:right;top:1329.7px">4800</span>
<span class="abs lg" style="left:2711.5px;top:1329.7px">-</span>
<span class="abs lg" style="left:2705px;width:50.5px;text-align:right;top:1329.7px">5400</span>
<div class="abs" style="left:2633px;top:1346.6px;width:32px;height:18.4px;background:#ffa200;border:solid #777;border-width:2.2px 1.6px;box-sizing:border-box;"></div>
<span class="abs lg" style="left:2657px;width:50.5px;text-align:right;top:1347.8px">4200</span>
<span class="abs lg" style="left:2711.5px;top:1347.8px">-</span>
<span class="abs lg" style="left:2705px;width:50.5px;text-align:right;top:1347.8px">4800</span>
<div class="abs" style="left:2633px;top:1364.6px;width:32px;height:18.4px;background:#ffff00;border:solid #777;border-width:2.2px 1.6px;box-sizing:border-box;"></div>
<span class="abs lg" style="left:2657px;width:50.5px;text-align:right;top:1365.8px">3600</span>
<span class="abs lg" style="left:2711.5px;top:1365.8px">-</span>
<span class="abs lg" style="left:2705px;width:50.5px;text-align:right;top:1365.8px">4200</span>
<div class="abs" style="left:2633px;top:1382.7px;width:32px;height:18.4px;background:#58ff00;border:solid #777;border-width:2.2px 1.6px;box-sizing:border-box;"></div>
<span class="abs lg" style="left:2657px;width:50.5px;text-align:right;top:1383.9px">3000</span>
<span class="abs lg" style="left:2711.5px;top:1383.9px">-</span>
<span class="abs lg" style="left:2705px;width:50.5px;text-align:right;top:1383.9px">3600</span>
<div class="abs" style="left:2633px;top:1400.8px;width:32px;height:18.4px;background:#48ff00;border:solid #777;border-width:2.2px 1.6px;box-sizing:border-box;"></div>
<span class="abs lg" style="left:2657px;width:50.5px;text-align:right;top:1402.0px">2400</span>
<span class="abs lg" style="left:2711.5px;top:1402.0px">-</span>
<span class="abs lg" style="left:2705px;width:50.5px;text-align:right;top:1402.0px">3000</span>
<div class="abs" style="left:2633px;top:1418.9px;width:32px;height:18.4px;background:#00ff00;border:solid #777;border-width:2.2px 1.6px;box-sizing:border-box;"></div>
<span class="abs lg" style="left:2657px;width:50.5px;text-align:right;top:1420.1px">1800</span>
<span class="abs lg" style="left:2711.5px;top:1420.1px">-</span>
<span class="abs lg" style="left:2705px;width:50.5px;text-align:right;top:1420.1px">2400</span>
<div class="abs" style="left:2633px;top:1437.0px;width:32px;height:18.4px;background:#00c868;border:solid #777;border-width:2.2px 1.6px;box-sizing:border-box;"></div>
<span class="abs lg" style="left:2657px;width:50.5px;text-align:right;top:1438.2px">1200</span>
<span class="abs lg" style="left:2711.5px;top:1438.2px">-</span>
<span class="abs lg" style="left:2705px;width:50.5px;text-align:right;top:1438.2px">1800</span>
<div class="abs" style="left:2633px;top:1455.0px;width:32px;height:18.4px;background:#00c070;border:solid #777;border-width:2.2px 1.6px;box-sizing:border-box;"></div>
<span class="abs lg" style="left:2657px;width:50.5px;text-align:right;top:1456.2px">600</span>
<span class="abs lg" style="left:2711.5px;top:1456.2px">-</span>
<span class="abs lg" style="left:2705px;width:50.5px;text-align:right;top:1456.2px">1200</span>
<div class="abs" style="left:2633px;top:1473.1px;width:32px;height:18.4px;background:#00a0b0;border:solid #777;border-width:2.2px 1.6px;box-sizing:border-box;"></div>
<span class="abs lg" style="left:2657px;width:50.5px;text-align:right;top:1474.3px">0</span>
<span class="abs lg" style="left:2711.5px;top:1474.3px">-</span>
<span class="abs lg" style="left:2705px;width:50.5px;text-align:right;top:1474.3px">600</span>
<div class="abs" style="left:2633px;top:1491.2px;width:32px;height:18.4px;background:#0068c0;border:solid #777;border-width:2.2px 1.6px;box-sizing:border-box;"></div>
<span class="abs lg" style="left:2657px;width:50.5px;text-align:right;top:1492.4px">-600</span>
<span class="abs lg" style="left:2711.5px;top:1492.4px">-</span>
<span class="abs lg" style="left:2705px;width:50.5px;text-align:right;top:1492.4px">0</span>
<div class="abs" style="left:2633px;top:1509.3px;width:32px;height:18.4px;background:#0038e0;border:solid #777;border-width:2.2px 1.6px;box-sizing:border-box;"></div>
<span class="abs lg" style="left:2657px;width:50.5px;text-align:right;top:1510.5px">-1200</span>
<span class="abs lg" style="left:2711.5px;top:1510.5px">-</span>
<span class="abs lg" style="left:2705px;width:50.5px;text-align:right;top:1510.5px">-600</span>
<div class="abs" style="left:2633px;top:1527.4px;width:32px;height:18.4px;background:#0000ff;border:solid #777;border-width:2.2px 1.6px;box-sizing:border-box;"></div>
<span class="abs lg" style="left:2657px;width:50.5px;text-align:right;top:1528.6px">-1800</span>
<span class="abs lg" style="left:2711.5px;top:1528.6px">-</span>
<span class="abs lg" style="left:2705px;width:50.5px;text-align:right;top:1528.6px">-1200</span>
<div class="abs" style="left:2633px;top:1545.4px;width:32px;height:18.4px;background:#2800d0;border:solid #777;border-width:2.2px 1.6px;box-sizing:border-box;"></div>
<span class="abs lg" style="left:2657px;width:50.5px;text-align:right;top:1546.6px">-2400</span>
<span class="abs lg" style="left:2711.5px;top:1546.6px">-</span>
<span class="abs lg" style="left:2705px;width:50.5px;text-align:right;top:1546.6px">-1800</span>
<div class="abs" style="left:2633px;top:1563.5px;width:32px;height:18.4px;background:#5800b0;border:solid #777;border-width:2.2px 1.6px;box-sizing:border-box;"></div>
<span class="abs lg" style="left:2657px;width:50.5px;text-align:right;top:1564.7px">-3000</span>
<span class="abs lg" style="left:2711.5px;top:1564.7px">-</span>
<span class="abs lg" style="left:2705px;width:50.5px;text-align:right;top:1564.7px">-2400</span>
<div class="abs" style="left:2633px;top:1581.6px;width:32px;height:18.4px;background:#900090;border:solid #777;border-width:2.2px 1.6px;box-sizing:border-box;"></div>
<span class="abs lg" style="left:2671.5px;top:1582.8px">Below</span>
<span class="abs lg" style="left:2705px;width:50.5px;text-align:right;top:1582.8px">-3000</span>
<div class="abs" style="left:2633px;top:1599.7px;width:32px;height:18.4px;background:#ffffff;border:solid #777;border-width:2.2px 1.6px;box-sizing:border-box;"></div>
<span class="abs lg" style="left:2671.5px;top:1600.9px">Undefined Value</span>
</div>
<div class="abs" style="left:1359.5px;top:1810px;width:92px;text-align:center;font-family:'Liberation Serif',serif;font-size:80px;line-height:90px;color:#000;white-space:nowrap;">(<b>b</b>)</div>
</body></html>
